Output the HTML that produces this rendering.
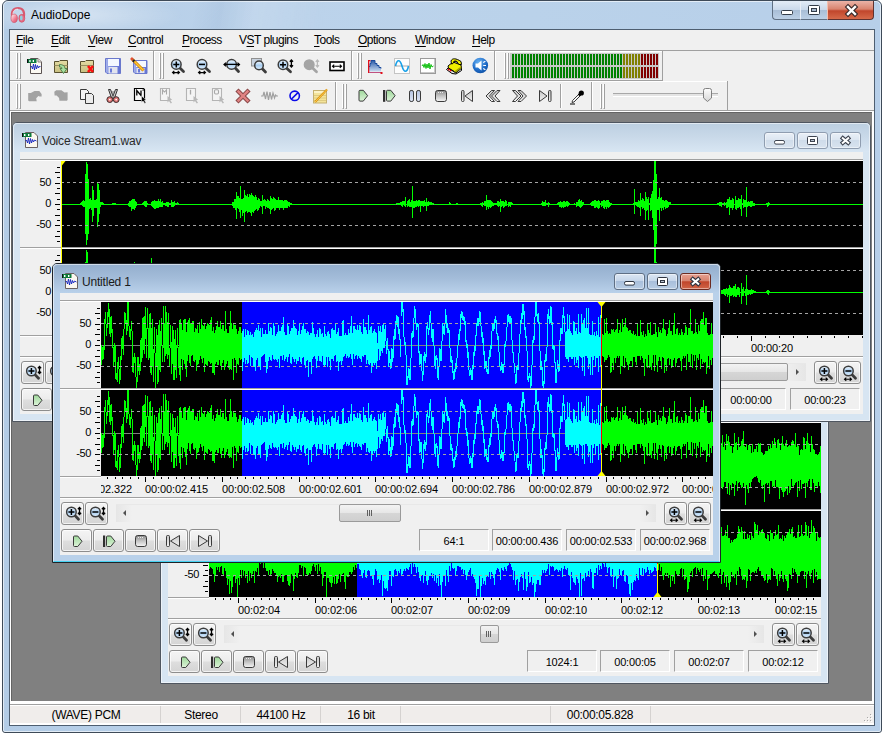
<!DOCTYPE html><html><head><meta charset="utf-8"><style>
html,body{margin:0;padding:0}
body{width:883px;height:735px;overflow:hidden;background:#fff;position:relative;font-family:'Liberation Sans', sans-serif}
.btn{position:absolute;box-sizing:border-box;border:1px solid #8d8d8d;border-radius:3px;background:linear-gradient(#f4f4f4 0%,#ececec 48%,#dedede 52%,#d4d4d4 100%);box-shadow:inset 0 0 0 1px rgba(255,255,255,.7)}
.box{position:absolute;box-sizing:border-box;border:1px solid #fff;border-left-color:#a0a0a0;border-top-color:#a0a0a0;background:#f0f0f0;font-size:11px;line-height:22px;text-align:center;color:#000;letter-spacing:-0.15px}
.grip{position:absolute;width:1px;border-left:1px solid #fff;border-right:1px solid #a0a0a0;border-bottom:1px solid #a0a0a0;box-sizing:content-box;width:0}
.u{text-decoration:underline;text-underline-offset:2px}
svg{overflow:visible}
</style></head><body><div style="position:absolute;left:2px;top:0px;width:880px;height:733px;box-sizing:border-box;border:1px solid #3e4a58;border-radius:6px 6px 3px 3px;background:linear-gradient(90deg,#b3cce6 0%,#bcd3eb 30%,#bad2ea 60%,#b7cfe9 100%)"></div><div style="position:absolute;left:3px;top:1px;width:878px;height:731px;box-sizing:border-box;border:1px solid rgba(255,255,255,.6);border-radius:5px 5px 2px 2px"></div><div style="position:absolute;left:3px;top:1px;width:878px;height:28px;border-radius:5px 5px 0 0;background:radial-gradient(ellipse 110px 22px at 70px 14px, rgba(255,255,255,.45), rgba(255,255,255,0) 100%),linear-gradient(100deg, rgba(255,255,255,0) 0px, rgba(255,255,255,0) 190px, rgba(120,150,190,.12) 215px, rgba(255,255,255,.10) 250px, rgba(255,255,255,0) 320px)"></div><svg style="position:absolute;left:10px;top:7px;" width="16" height="16" viewBox="0 0 16 16"><defs><linearGradient id="hpL" x1="0" y1="0" x2="1" y2="1"><stop offset="0" stop-color="#fff"/><stop offset=".6" stop-color="#f07a90"/><stop offset="1" stop-color="#d84868"/></linearGradient></defs>
<path d="M2.2 10.5 C1 4 3.5 1 8 1 C12.5 1 15 4 13.8 10.5" fill="none" stroke="#d85a70" stroke-width="2.2"/>
<path d="M3 8 C2.8 4 4.5 2.2 8 2.2" fill="none" stroke="#fff" stroke-width=".9" opacity=".8"/>
<ellipse cx="4.2" cy="11.3" rx="3.2" ry="4.2" fill="url(#hpL)" stroke="#c84a60" stroke-width=".6"/>
<ellipse cx="11.8" cy="11.3" rx="3" ry="4" fill="#e86a84" stroke="#c84a60" stroke-width=".6"/>
<ellipse cx="11.3" cy="11" rx="1.4" ry="2.4" fill="#8fd0e0"/></svg><div style="position:absolute;left:31px;top:8px;font-size:12px;line-height:14px;color:#000;white-space:nowrap;">AudioDope</div><div style="position:absolute;left:772px;top:1px;width:28px;height:19px;box-sizing:border-box;border:1px solid #5f6f82;border-top:none;border-right:none;border-radius:0 0 0 4px;background:linear-gradient(#e3ecf6 0%,#c9d8ea 50%,#a9bed6 52%,#bcd0e6 100%)"></div><div style="position:absolute;left:800px;top:1px;width:27px;height:19px;box-sizing:border-box;border-bottom:1px solid #5f6f82;border-left:1px solid #e8eef6;background:linear-gradient(#e3ecf6 0%,#c9d8ea 50%,#a9bed6 52%,#bcd0e6 100%)"></div><div style="position:absolute;left:827px;top:1px;width:47px;height:19px;box-sizing:border-box;border:1px solid #5e3230;border-top:none;border-left:1px solid #f3c0b0;border-radius:0 0 4px 0;background:linear-gradient(#eab3a7 0%,#d9846f 45%,#c1462c 55%,#d66a4a 100%)"></div><svg style="position:absolute;left:772px;top:1px;" width="102" height="19" viewBox="0 0 102 19"><rect x="9.5" y="9.5" width="11" height="4" rx="1" fill="#fff" stroke="#333c48" stroke-width="1"/>
<rect x="36.5" y="4.5" width="11" height="9" rx="1" fill="#fff" stroke="#333c48" stroke-width="1"/><rect x="39.5" y="7.5" width="5" height="3" fill="#a8b8cc" stroke="#333c48" stroke-width="1"/>
<path d="M76 6 L83 13 M83 6 L76 13" stroke="#3a2a2a" stroke-width="4.6" stroke-linecap="square"/><path d="M76 6 L83 13 M83 6 L76 13" stroke="#fff" stroke-width="2.4" stroke-linecap="square"/></svg><div style="position:absolute;left:9px;top:29px;width:866px;height:697px;box-sizing:border-box;border:1px solid #4e5e70;background:#f0f0f0"></div><div style="position:absolute;left:16px;top:33px;font-size:12px;line-height:14px;color:#000;white-space:nowrap;letter-spacing:-0.5px"><span class="u">F</span>ile</div><div style="position:absolute;left:51px;top:33px;font-size:12px;line-height:14px;color:#000;white-space:nowrap;letter-spacing:-0.5px"><span class="u">E</span>dit</div><div style="position:absolute;left:88px;top:33px;font-size:12px;line-height:14px;color:#000;white-space:nowrap;letter-spacing:-0.5px"><span class="u">V</span>iew</div><div style="position:absolute;left:128px;top:33px;font-size:12px;line-height:14px;color:#000;white-space:nowrap;letter-spacing:-0.5px"><span class="u">C</span>ontrol</div><div style="position:absolute;left:182px;top:33px;font-size:12px;line-height:14px;color:#000;white-space:nowrap;letter-spacing:-0.5px"><span class="u">P</span>rocess</div><div style="position:absolute;left:239px;top:33px;font-size:12px;line-height:14px;color:#000;white-space:nowrap;letter-spacing:-0.5px">V<span class="u">S</span>T plugins</div><div style="position:absolute;left:314px;top:33px;font-size:12px;line-height:14px;color:#000;white-space:nowrap;letter-spacing:-0.5px"><span class="u">T</span>ools</div><div style="position:absolute;left:358px;top:33px;font-size:12px;line-height:14px;color:#000;white-space:nowrap;letter-spacing:-0.5px"><span class="u">O</span>ptions</div><div style="position:absolute;left:415px;top:33px;font-size:12px;line-height:14px;color:#000;white-space:nowrap;letter-spacing:-0.5px"><span class="u">W</span>indow</div><div style="position:absolute;left:472px;top:33px;font-size:12px;line-height:14px;color:#000;white-space:nowrap;letter-spacing:-0.5px"><span class="u">H</span>elp</div><div style="position:absolute;left:10px;top:50px;width:864px;height:1px;background:#a0a0a0"></div><div style="position:absolute;left:10px;top:51px;width:652px;height:1px;background:#fff"></div><div style="position:absolute;left:10px;top:80px;width:652px;height:1px;background:#a0a0a0"></div><div style="position:absolute;left:10px;top:81px;width:717px;height:1px;background:#fff"></div><div style="position:absolute;left:10px;top:110px;width:864px;height:1px;background:#a0a0a0"></div><div style="position:absolute;left:10px;top:111px;width:864px;height:594px;background:#fff"></div><div class="grip" style="left:16px;top:53px;height:25px"></div><div class="grip" style="left:19px;top:53px;height:25px"></div><div style="position:absolute;left:153px;top:51px;width:1px;height:29px;background:#a0a0a0"></div><div style="position:absolute;left:154px;top:51px;width:1px;height:29px;background:#fff"></div><div class="grip" style="left:159px;top:53px;height:25px"></div><div class="grip" style="left:162px;top:53px;height:25px"></div><div style="position:absolute;left:351px;top:51px;width:1px;height:29px;background:#a0a0a0"></div><div style="position:absolute;left:352px;top:51px;width:1px;height:29px;background:#fff"></div><div class="grip" style="left:357px;top:53px;height:25px"></div><div class="grip" style="left:360px;top:53px;height:25px"></div><div style="position:absolute;left:494px;top:51px;width:1px;height:29px;background:#a0a0a0"></div><div style="position:absolute;left:495px;top:51px;width:1px;height:29px;background:#fff"></div><div class="grip" style="left:504px;top:53px;height:25px"></div><div class="grip" style="left:507px;top:53px;height:25px"></div><div style="position:absolute;left:662px;top:51px;width:1px;height:30px;background:#a0a0a0"></div><div class="grip" style="left:16px;top:84px;height:24px"></div><div class="grip" style="left:19px;top:84px;height:24px"></div><div style="position:absolute;left:335px;top:82px;width:1px;height:28px;background:#a0a0a0"></div><div style="position:absolute;left:336px;top:82px;width:1px;height:28px;background:#fff"></div><div class="grip" style="left:342px;top:84px;height:24px"></div><div class="grip" style="left:345px;top:84px;height:24px"></div><div style="position:absolute;left:560px;top:84px;width:1px;height:24px;background:#a0a0a0"></div><div style="position:absolute;left:561px;top:84px;width:1px;height:24px;background:#fff"></div><div style="position:absolute;left:591px;top:82px;width:1px;height:28px;background:#a0a0a0"></div><div style="position:absolute;left:592px;top:82px;width:1px;height:28px;background:#fff"></div><div class="grip" style="left:600px;top:84px;height:24px"></div><div class="grip" style="left:603px;top:84px;height:24px"></div><div style="position:absolute;left:727px;top:81px;width:1px;height:30px;background:#a0a0a0"></div><div style="position:absolute;left:510px;top:53px;width:149px;height:26px;background:#c8c8c8"></div><svg style="position:absolute;left:510px;top:53px;" width="149" height="26" viewBox="0 0 149 26"><rect x="2" y="1" width="2" height="11" fill="#008000"/><rect x="2" y="14" width="2" height="11" fill="#008000"/><rect x="5" y="1" width="2" height="11" fill="#008000"/><rect x="5" y="14" width="2" height="11" fill="#008000"/><rect x="8" y="1" width="2" height="11" fill="#008000"/><rect x="8" y="14" width="2" height="11" fill="#008000"/><rect x="11" y="1" width="2" height="11" fill="#008000"/><rect x="11" y="14" width="2" height="11" fill="#008000"/><rect x="14" y="1" width="2" height="11" fill="#008000"/><rect x="14" y="14" width="2" height="11" fill="#008000"/><rect x="17" y="1" width="2" height="11" fill="#008000"/><rect x="17" y="14" width="2" height="11" fill="#008000"/><rect x="20" y="1" width="2" height="11" fill="#008000"/><rect x="20" y="14" width="2" height="11" fill="#008000"/><rect x="23" y="1" width="2" height="11" fill="#008000"/><rect x="23" y="14" width="2" height="11" fill="#008000"/><rect x="26" y="1" width="2" height="11" fill="#008000"/><rect x="26" y="14" width="2" height="11" fill="#008000"/><rect x="29" y="1" width="2" height="11" fill="#008000"/><rect x="29" y="14" width="2" height="11" fill="#008000"/><rect x="32" y="1" width="2" height="11" fill="#008000"/><rect x="32" y="14" width="2" height="11" fill="#008000"/><rect x="35" y="1" width="2" height="11" fill="#008000"/><rect x="35" y="14" width="2" height="11" fill="#008000"/><rect x="38" y="1" width="2" height="11" fill="#008000"/><rect x="38" y="14" width="2" height="11" fill="#008000"/><rect x="41" y="1" width="2" height="11" fill="#008000"/><rect x="41" y="14" width="2" height="11" fill="#008000"/><rect x="44" y="1" width="2" height="11" fill="#008000"/><rect x="44" y="14" width="2" height="11" fill="#008000"/><rect x="47" y="1" width="2" height="11" fill="#008000"/><rect x="47" y="14" width="2" height="11" fill="#008000"/><rect x="50" y="1" width="2" height="11" fill="#008000"/><rect x="50" y="14" width="2" height="11" fill="#008000"/><rect x="53" y="1" width="2" height="11" fill="#008000"/><rect x="53" y="14" width="2" height="11" fill="#008000"/><rect x="56" y="1" width="2" height="11" fill="#008000"/><rect x="56" y="14" width="2" height="11" fill="#008000"/><rect x="59" y="1" width="2" height="11" fill="#008000"/><rect x="59" y="14" width="2" height="11" fill="#008000"/><rect x="62" y="1" width="2" height="11" fill="#008000"/><rect x="62" y="14" width="2" height="11" fill="#008000"/><rect x="65" y="1" width="2" height="11" fill="#008000"/><rect x="65" y="14" width="2" height="11" fill="#008000"/><rect x="68" y="1" width="2" height="11" fill="#008000"/><rect x="68" y="14" width="2" height="11" fill="#008000"/><rect x="71" y="1" width="2" height="11" fill="#008000"/><rect x="71" y="14" width="2" height="11" fill="#008000"/><rect x="74" y="1" width="2" height="11" fill="#008000"/><rect x="74" y="14" width="2" height="11" fill="#008000"/><rect x="77" y="1" width="2" height="11" fill="#008000"/><rect x="77" y="14" width="2" height="11" fill="#008000"/><rect x="80" y="1" width="2" height="11" fill="#008000"/><rect x="80" y="14" width="2" height="11" fill="#008000"/><rect x="83" y="1" width="2" height="11" fill="#008000"/><rect x="83" y="14" width="2" height="11" fill="#008000"/><rect x="86" y="1" width="2" height="11" fill="#008000"/><rect x="86" y="14" width="2" height="11" fill="#008000"/><rect x="89" y="1" width="2" height="11" fill="#008000"/><rect x="89" y="14" width="2" height="11" fill="#008000"/><rect x="92" y="1" width="2" height="11" fill="#008000"/><rect x="92" y="14" width="2" height="11" fill="#008000"/><rect x="95" y="1" width="2" height="11" fill="#008000"/><rect x="95" y="14" width="2" height="11" fill="#008000"/><rect x="98" y="1" width="2" height="11" fill="#008000"/><rect x="98" y="14" width="2" height="11" fill="#008000"/><rect x="101" y="1" width="2" height="11" fill="#008000"/><rect x="101" y="14" width="2" height="11" fill="#008000"/><rect x="104" y="1" width="2" height="11" fill="#008000"/><rect x="104" y="14" width="2" height="11" fill="#008000"/><rect x="107" y="1" width="2" height="11" fill="#008000"/><rect x="107" y="14" width="2" height="11" fill="#008000"/><rect x="110" y="1" width="2" height="11" fill="#008000"/><rect x="110" y="14" width="2" height="11" fill="#008000"/><rect x="113" y="1" width="2" height="11" fill="#808000"/><rect x="113" y="14" width="2" height="11" fill="#808000"/><rect x="116" y="1" width="2" height="11" fill="#808000"/><rect x="116" y="14" width="2" height="11" fill="#808000"/><rect x="119" y="1" width="2" height="11" fill="#808000"/><rect x="119" y="14" width="2" height="11" fill="#808000"/><rect x="122" y="1" width="2" height="11" fill="#808000"/><rect x="122" y="14" width="2" height="11" fill="#808000"/><rect x="125" y="1" width="2" height="11" fill="#808000"/><rect x="125" y="14" width="2" height="11" fill="#808000"/><rect x="128" y="1" width="2" height="11" fill="#808000"/><rect x="128" y="14" width="2" height="11" fill="#808000"/><rect x="131" y="1" width="2" height="11" fill="#800000"/><rect x="131" y="14" width="2" height="11" fill="#800000"/><rect x="134" y="1" width="2" height="11" fill="#800000"/><rect x="134" y="14" width="2" height="11" fill="#800000"/><rect x="137" y="1" width="2" height="11" fill="#800000"/><rect x="137" y="14" width="2" height="11" fill="#800000"/><rect x="140" y="1" width="2" height="11" fill="#800000"/><rect x="140" y="14" width="2" height="11" fill="#800000"/><rect x="143" y="1" width="2" height="11" fill="#800000"/><rect x="143" y="14" width="2" height="11" fill="#800000"/><rect x="146" y="1" width="2" height="11" fill="#800000"/><rect x="146" y="14" width="2" height="11" fill="#800000"/></svg><div style="position:absolute;left:613px;top:93px;width:105px;height:1px;background:#a8a8a8"></div><div style="position:absolute;left:613px;top:94px;width:105px;height:2px;background:#e4e4e4"></div><div style="position:absolute;left:613px;top:96px;width:105px;height:1px;background:#fff"></div><svg style="position:absolute;left:702px;top:87px;" width="11" height="16" viewBox="0 0 11 16"><defs><linearGradient id="gTh" x1="0" y1="0" x2="0" y2="1"><stop offset="0" stop-color="#fdfdfd"/><stop offset="1" stop-color="#d6d6d6"/></linearGradient></defs><path d="M1.5 3.5 Q1.5 1.5 3.5 1.5 H7.5 Q9.5 1.5 9.5 3.5 V11 L5.5 14.5 L1.5 11 Z" fill="url(#gTh)" stroke="#808080"/></svg><svg width="0" height="0" style="position:absolute"><defs>
<linearGradient id="gPlay" x1="0" y1="0" x2="0" y2="1"><stop offset="0" stop-color="#9fd89b"/><stop offset="1" stop-color="#dcf3d8"/></linearGradient>
<linearGradient id="gGray" x1="0" y1="0" x2="0" y2="1"><stop offset="0" stop-color="#c8c8c8"/><stop offset="1" stop-color="#f2f2f2"/></linearGradient>
<linearGradient id="gStop" x1="0" y1="0" x2="0" y2="1"><stop offset="0" stop-color="#8a8a8a"/><stop offset=".5" stop-color="#c4c4c4"/><stop offset="1" stop-color="#f6f6f6"/></linearGradient>
<linearGradient id="gPause" x1="0" y1="0" x2="0" y2="1"><stop offset="0" stop-color="#b4c4e4"/><stop offset="1" stop-color="#dce4f4"/></linearGradient>
<linearGradient id="gLens" x1="0" y1="0" x2="0" y2="1"><stop offset="0" stop-color="#f4faff"/><stop offset=".5" stop-color="#a8cdf0"/><stop offset="1" stop-color="#e0f0ff"/></linearGradient>
<linearGradient id="gFloppy" x1="0" y1="0" x2="1" y2="0"><stop offset="0" stop-color="#aab6ec"/><stop offset=".3" stop-color="#7f8fe0"/><stop offset="1" stop-color="#6272d4"/></linearGradient>
<linearGradient id="gFolder" x1="0" y1="0" x2="0" y2="1"><stop offset="0" stop-color="#e4dca4"/><stop offset="1" stop-color="#c8bf80"/></linearGradient>
<linearGradient id="gSpec" x1="0" y1="0" x2="0" y2="1"><stop offset="0" stop-color="#2a5aa8"/><stop offset="1" stop-color="#c8daf0"/></linearGradient>
<radialGradient id="gSpk" cx=".4" cy=".3" r=".8"><stop offset="0" stop-color="#6ab4f4"/><stop offset=".6" stop-color="#1f6cc8"/><stop offset="1" stop-color="#0c4a9c"/></radialGradient>
</defs></svg><svg style="position:absolute;left:26px;top:57px;" width="18" height="18" viewBox="0 0 18 18"><path d="M4.5 1.5 H12 L15.5 5 V16.5 H4.5 Z" fill="#fbf9f2" stroke="#5a5252"/>
<path d="M12 1.5 V5 H15.5" fill="#e8e4dc" stroke="#8a8282"/>
<rect x="1" y="2" width="9.5" height="4" fill="#0c7a3e"/><rect x="1" y="2" width="1.2" height="4" fill="#101010"/>
<rect x="3.3" y="3" width="1.3" height="2" fill="#fff"/><rect x="6.7" y="3" width="1.3" height="2" fill="#fff"/>
<path d="M4.5 10 L5.5 9 L6.5 12 L7.5 7 L8.5 13 L9.5 7.5 L10.5 12 L11.5 8.5 L12.5 11 L13.5 9 L14.5 10" fill="none" stroke="#1020c0" stroke-width="0.9"/></svg><svg style="position:absolute;left:53px;top:58px;" width="17" height="17" viewBox="0 0 17 17"><path d="M1.5 3.5 H6 L7 2.5 H14.5 V14.5 H1.5 Z" fill="url(#gFolder)" stroke="#585030" stroke-width="1"/>
<path d="M1.5 7.5 H14.5" stroke="#9a9060" stroke-width="1"/>
<path d="M6.5 6.5 C10 6.5 12 8 12 10.5 H14 L10.5 15.5 L7 10.5 H9 C9 9.5 8.5 9 6.5 9 Z" fill="#a8e0a0" stroke="#4a7a48" stroke-width="0.9"/></svg><svg style="position:absolute;left:79px;top:58px;" width="17" height="17" viewBox="0 0 17 17"><path d="M1.5 3.5 H6 L7 2.5 H14.5 V14.5 H1.5 Z" fill="url(#gFolder)" stroke="#585030" stroke-width="1"/>
<path d="M1.5 7.5 H14.5" stroke="#9a9060" stroke-width="1"/>
<path d="M9 8 L14 14 M14 8 L9 14" stroke="#ff1010" stroke-width="2.6"/></svg><svg style="position:absolute;left:105px;top:58px;" width="16" height="16" viewBox="0 0 16 16"><path d="M0.5 0.5 H15.5 V15.5 H2 L0.5 14 Z" fill="url(#gFloppy)" stroke="#6a78cc" stroke-width="1"/>
<rect x="3" y="1" width="11" height="7" fill="#f4f8ff"/><rect x="3.5" y="9" width="9" height="6.5" fill="#e2e4ee"/><rect x="5" y="10.5" width="2" height="4" fill="#6a7ad8"/></svg><svg style="position:absolute;left:130px;top:57px;" width="18" height="18" viewBox="0 0 18 18"><path d="M3.5 3.5 H17 V16.5 H5 L3.5 15 Z" fill="url(#gFloppy)" stroke="#6a78cc" stroke-width="1"/>
<rect x="6" y="4" width="10" height="6" fill="#f4f8ff"/><rect x="6.5" y="11" width="8" height="5" fill="#e2e4ee"/><rect x="8" y="12" width="2" height="3.5" fill="#6a7ad8"/>
<path d="M2.5 2.5 L13.5 13.5" stroke="#c87800" stroke-width="3"/><path d="M2.5 2.5 L13.5 13.5" stroke="#ffc830" stroke-width="1.6"/>
<path d="M1 1 L3 3" stroke="#e05030" stroke-width="2.6"/><path d="M3 3.2 L4.3 4.5" stroke="#202020" stroke-width="2.6"/></svg><svg style="position:absolute;left:166px;top:55px;" width="22" height="22" viewBox="0 0 22 22"><path d="M13.18 12.280000000000001 L17.5 16.5" stroke="#3c3c3c" stroke-width="2.8" stroke-linecap="round"/><circle cx="10.3" cy="9.4" r="4.8" fill="url(#gLens)" stroke="#3c3c3c" stroke-width="1.5"/><path d="M7.300000000000001 9.4 H13.3 M10.3 6.4 V12.4" stroke="#000" stroke-width="1.5"/><path d="M6.5 17.6 H13.5 M8.3 16.0 L6.5 17.6 L8.3 19.200000000000003 M11.7 16.0 L13.5 17.6 L11.7 19.200000000000003" stroke="#000" stroke-width="1.1" fill="none"/></svg><svg style="position:absolute;left:192px;top:55px;" width="22" height="22" viewBox="0 0 22 22"><path d="M12.879999999999999 12.280000000000001 L17.5 16.5" stroke="#3c3c3c" stroke-width="2.8" stroke-linecap="round"/><circle cx="10" cy="9.4" r="4.8" fill="url(#gLens)" stroke="#3c3c3c" stroke-width="1.5"/><path d="M7 9.4 H13" stroke="#000" stroke-width="1.5"/><path d="M6.5 17.6 H13.5 M8.3 16.0 L6.5 17.6 L8.3 19.200000000000003 M11.7 16.0 L13.5 17.6 L11.7 19.200000000000003" stroke="#000" stroke-width="1.1" fill="none"/></svg><svg style="position:absolute;left:221px;top:55px;" width="22" height="22" viewBox="0 0 22 22"><path d="M13.48 12.280000000000001 L17.5 16.5" stroke="#3c3c3c" stroke-width="2.8" stroke-linecap="round"/><circle cx="10.6" cy="9.4" r="4.8" fill="url(#gLens)" stroke="#3c3c3c" stroke-width="1.5"/><path d="M3 9.4 H18.5 M5 7.6 L3 9.4 L5 11.2 M16.5 7.6 L18.5 9.4 L16.5 11.2" stroke="#000" stroke-width="1.2" fill="none"/></svg><svg style="position:absolute;left:249px;top:55px;" width="22" height="22" viewBox="0 0 22 22"><rect x="2.5" y="3.5" width="10" height="7.5" fill="#c8d2de" stroke="#909090"/><path d="M12.58 12.98 L16.5 17" stroke="#3c3c3c" stroke-width="2.8" stroke-linecap="round"/><circle cx="10" cy="10.4" r="4.3" fill="url(#gLens)" stroke="#3c3c3c" stroke-width="1.5"/></svg><svg style="position:absolute;left:273px;top:55px;" width="22" height="22" viewBox="0 0 22 22"><path d="M12.879999999999999 12.579999999999998 L17.5 16.8" stroke="#3c3c3c" stroke-width="2.8" stroke-linecap="round"/><circle cx="10" cy="9.7" r="4.8" fill="url(#gLens)" stroke="#3c3c3c" stroke-width="1.5"/><path d="M7 9.7 H13 M10 6.699999999999999 V12.7" stroke="#000" stroke-width="1.5"/><path d="M18.4 5 V12 M16.799999999999997 6.8 L18.4 5 L20.0 6.8 M16.799999999999997 10.2 L18.4 12 L20.0 10.2" stroke="#000" stroke-width="1.3" fill="none"/></svg><svg style="position:absolute;left:299px;top:55px;" width="22" height="22" viewBox="0 0 22 22"><path d="M13.079999999999998 12.579999999999998 L17.5 16.8" stroke="#a4a4a4" stroke-width="2.8" stroke-linecap="round"/><circle cx="10.2" cy="9.7" r="4.8" fill="#a4a4a4" stroke="#a4a4a4" stroke-width="1.5"/><path d="M18.4 5 V12 M16.8 6.8 L18.4 5 L20 6.8 M16.8 10.2 L18.4 12 L20 10.2" stroke="#b8b8b8" stroke-width="1.2" fill="none"/></svg><svg style="position:absolute;left:329px;top:60px;" width="16" height="12" viewBox="0 0 16 12"><rect x="1" y="2" width="14" height="8.5" fill="#fff" stroke="#000" stroke-width="1.6"/><path d="M3.5 6.2 H12.5 M5.2 4.6 L3.5 6.2 L5.2 7.8 M10.8 4.6 L12.5 6.2 L10.8 7.8" stroke="#000" stroke-width="1.1" fill="none"/></svg><svg style="position:absolute;left:364px;top:55px;" width="24" height="22" viewBox="0 0 24 22"><path d="M5 12 H6 V9 H7 V6 H11 V9 H13 V11 H15 V13 H17 V17 H5 Z" transform="translate(0,-0.5)" fill="url(#gSpec)"/>
<path d="M5 11.5 H6 V8.5 H7 V5.5 H11 V8.5 H13 V10.5 H15 V12.5 H17 V13.5" fill="none" stroke="#1a4a9c" stroke-width="1"/>
<rect x="4" y="5" width="1.3" height="13" fill="#e0101c"/><rect x="4" y="5" width="2.5" height="1.2" fill="#e0101c"/><rect x="5" y="17" width="12" height="1" fill="#c05080"/><rect x="16.5" y="17" width="2" height="2" fill="#e0101c"/></svg><svg style="position:absolute;left:394px;top:58px;" width="16" height="16" viewBox="0 0 16 16"><rect x="0.5" y="0.5" width="15" height="15" fill="#fdfdfd" stroke="#c4c4c4"/><path d="M1 8 H15" stroke="#a8a8a8"/>
<path d="M1.5 8 C3 1 6 1 8 8 C10 15 13 15 14.5 8" fill="none" stroke="#18a0e8" stroke-width="1.6"/></svg><svg style="position:absolute;left:420px;top:58px;" width="16" height="16" viewBox="0 0 16 16"><rect x="0.5" y="0.5" width="15" height="15" fill="#fff" stroke="#9a9a9a"/><rect x="1" y="14" width="14" height="1" fill="#c8c8c8"/><rect x="14" y="1" width="1" height="14" fill="#c8c8c8"/>
<path d="M2 8 L3 6.5 L4 9.5 L5 5.5 L6 10.5 L7 6 L8 10 L9 5 L10 11 L11 6.5 L12 9 L13.5 8" fill="none" stroke="#10c010" stroke-width="1"/></svg><svg style="position:absolute;left:442px;top:55px;" width="24" height="22" viewBox="0 0 24 22"><path d="M4.5 14.5 L6 13 L14 18 L19.5 13 L19.5 15.5 L14 19 L10 18.5 Z" fill="#e8e8e8" stroke="#000" stroke-width="1"/>
<circle cx="6.8" cy="14.5" r=".9" fill="#ff0000"/><circle cx="8.6" cy="15.6" r=".9" fill="#ff0000"/>
<path d="M6 11 L11 7 L19 10 L19.5 13 L14 17.5 L6.5 13 Z" fill="#f0f000" stroke="#000" stroke-width="1"/>
<path d="M12 16.5 L19 11.5 L19.5 13 L14 17.5 Z" fill="#a0a000"/>
<path d="M9 6 C10 3 14 3 19 6.5 L19.5 9.5 L17 9.5 L15 7 C13 6 11.5 6.5 11 8.5 L9.5 9 Z" fill="#f0f000" stroke="#000" stroke-width="1"/>
<path d="M11.5 7 C12 5.5 14 5.8 15.5 7" fill="none" stroke="#000" stroke-width="1"/></svg><svg style="position:absolute;left:472px;top:57px;" width="17" height="17" viewBox="0 0 17 17"><circle cx="8.3" cy="8.5" r="7.8" fill="url(#gSpk)"/>
<path d="M3.5 6.5 H6 L9.5 3.5 V13.5 L6 10.5 H3.5 Z" fill="#fff"/>
<path d="M11.2 5.5 L13.4 4.2 M11.2 8.5 H14 M11.2 11.5 L13.4 12.8" stroke="#fff" stroke-width="1.1"/></svg><svg style="position:absolute;left:0px;top:0px;" width="80" height="110" viewBox="0 0 80 110"><path d="M28.2 93.1 L30.8 93.1 L34.5 91.1 L39.3 91.1 L41.6 93.9 L41.6 96.5 L39.6 96.5 L38.4 95.9 L36.2 98.2 L36.7 101.3 L29.1 101.3 L28.2 100.4 Z" fill="#a2a2a2"/><path d="M54.3 91.7 L56.3 90.2 L61.4 90.2 L64.5 92.5 L67.6 92.2 L67.6 99.9 L66.8 100.7 L59.4 100.7 L59.1 97.9 L56.6 95.6 L54.6 95.6 Z" fill="#a2a2a2"/></svg><svg style="position:absolute;left:80px;top:88px;" width="16" height="16" viewBox="0 0 16 16"><path d="M0.5 1.5 H6.5 L8.5 3.5 V11.5 H0.5 Z" fill="#f4f4f4" stroke="#3a3a3a"/>
<path d="M5.5 5.5 H11.5 L13.5 7.5 V15.5 H5.5 Z" fill="#ececec" stroke="#3a3a3a"/></svg><svg style="position:absolute;left:105px;top:88px;" width="16" height="16" viewBox="0 0 16 16"><path d="M3.5 1.5 L5.5 1.5 L8 8 L10.5 1.5 L12.5 1.5 L9.5 10 L6.5 10 Z" fill="#d0d0d0" stroke="#303030" stroke-width="1"/>
<path d="M8 3 V9" stroke="#707070" stroke-width="1"/>
<circle cx="4.8" cy="11.6" r="2.9" fill="#e07474" stroke="#3a2a2a" stroke-width="1"/><circle cx="11.2" cy="11.6" r="2.9" fill="#e07474" stroke="#3a2a2a" stroke-width="1"/>
<circle cx="4.8" cy="11.6" r="0.9" fill="#fff"/><circle cx="11.2" cy="11.6" r="0.9" fill="#fff"/></svg><svg style="position:absolute;left:133px;top:87px;" width="16" height="17" viewBox="0 0 16 17"><path d="M1.5 1.5 H10.5 L11.5 2.5 V13.5 H1.5 Z" fill="#f8f8f8" stroke="#000" stroke-width="1.2"/>
<path d="M3.8 8.5 V3.5 L8 8.5 V3.5" stroke="#000" stroke-width="1.3" fill="none"/><rect x="9.5" y="2.5" width="1.2" height="1.2" fill="#000"/>
<path d="M8.5 9 L8.5 15.5 L10 14 L11.8 16.5 L13 15.8 L11.3 13.2 L13.2 12.8 Z" fill="#000" stroke="#fff" stroke-width=".5"/></svg><svg style="position:absolute;left:159px;top:87px;" width="16" height="17" viewBox="0 0 16 17"><path d="M1.5 1.5 H10.5 V13.5 H1.5 Z" fill="#f4f4f4" stroke="#b4b4b4" stroke-width="1.1"/><path d="M3.5 7.5 V2.8 L5.5 5 L7.5 2.8 V7.5" stroke="#a8a8a8" stroke-width="1.1" fill="none"/>
<path d="M8.5 9 L8.5 15.5 L10 14 L11.8 16.5 L13 15.8 L11.3 13.2 L13.2 12.8 Z" fill="#b8b8b8"/></svg><svg style="position:absolute;left:185px;top:87px;" width="16" height="17" viewBox="0 0 16 17"><path d="M1.5 1.5 H10.5 V13.5 H1.5 Z" fill="#f4f4f4" stroke="#b4b4b4" stroke-width="1.1"/><path d="M5.5 2.8 V7.5" stroke="#a8a8a8" stroke-width="1.3"/>
<path d="M8.5 9 L8.5 15.5 L10 14 L11.8 16.5 L13 15.8 L11.3 13.2 L13.2 12.8 Z" fill="#b8b8b8"/></svg><svg style="position:absolute;left:211px;top:87px;" width="16" height="17" viewBox="0 0 16 17"><path d="M1.5 1.5 H10.5 V13.5 H1.5 Z" fill="#f4f4f4" stroke="#b4b4b4" stroke-width="1.1"/><rect x="3.5" y="2.8" width="4" height="4.2" rx="1.2" fill="none" stroke="#a8a8a8" stroke-width="1.1"/>
<path d="M8.5 9 L8.5 15.5 L10 14 L11.8 16.5 L13 15.8 L11.3 13.2 L13.2 12.8 Z" fill="#b8b8b8"/></svg><svg style="position:absolute;left:235px;top:88px;" width="16" height="16" viewBox="0 0 16 16"><path d="M3.5 3.5 L12.5 12.5 M12.5 3.5 L3.5 12.5" stroke="#8a4848" stroke-width="4.4" stroke-linecap="square"/>
<path d="M3.5 3.5 L12.5 12.5 M12.5 3.5 L3.5 12.5" stroke="#e08282" stroke-width="2.4" stroke-linecap="square"/></svg><svg style="position:absolute;left:261px;top:88px;" width="17" height="16" viewBox="0 0 17 16"><path d="M0 8 H2 L3 4 L4.5 11 L6 3.5 L7.5 12 L9 4 L10.5 11.5 L12 5 L13.5 10 L14.5 7 L15.5 8 H17" fill="none" stroke="#a0a0a0" stroke-width="1.2"/></svg><svg style="position:absolute;left:287px;top:88px;" width="16" height="16" viewBox="0 0 16 16"><circle cx="7.7" cy="7.8" r="4.7" fill="none" stroke="#0a0ae8" stroke-width="1.6"/><path d="M4.5 11 L11 4.6" stroke="#0a0ae8" stroke-width="1.6"/></svg><svg style="position:absolute;left:312px;top:88px;" width="16" height="16" viewBox="0 0 16 16"><rect x="1.5" y="2.5" width="13" height="12.5" fill="#f4e49a" stroke="#c4b070"/><rect x="2" y="3" width="12" height="2" fill="#fbf3c8"/>
<path d="M2 7.5 H14 M2 10 H14 M2 12.5 H14" stroke="#d8c47a" stroke-width=".8"/>
<path d="M3 14 L15 1.5" stroke="#d88a10" stroke-width="2"/><path d="M3 14 L15 1.5" stroke="#ffd84a" stroke-width=".9"/></svg><svg style="position:absolute;left:358px;top:89px;" width="12" height="14" viewBox="0 0 12 14"><path d="M1.0 2.3 Q1.0 1.3 2.0 1.3 H5.3 L9.6 6.7 L5.3 12.100000000000001 H2.0 Q1.0 12.100000000000001 1.0 11.100000000000001 Z" fill="url(#gPlay)" stroke="#3a3a3a" stroke-width="1" stroke-linejoin="round"/></svg><svg style="position:absolute;left:382px;top:89px;" width="15" height="14" viewBox="0 0 15 14"><rect x="1" y="1" width="2.3" height="11.8" fill="#303030"/><path d="M4.5 2.3 Q4.5 1.3 5.5 1.3 H8.8 L13.1 6.7 L8.8 12.100000000000001 H5.5 Q4.5 12.100000000000001 4.5 11.100000000000001 Z" fill="url(#gPlay)" stroke="#3a3a3a" stroke-width="1" stroke-linejoin="round"/></svg><svg style="position:absolute;left:408px;top:89px;" width="14" height="14" viewBox="0 0 14 14"><rect x="1.5" y="1.5" width="4" height="11" rx="1.6" fill="url(#gPause)" stroke="#3a3a3a"/><rect x="8.5" y="1.5" width="4" height="11" rx="1.6" fill="url(#gPause)" stroke="#3a3a3a"/></svg><svg style="position:absolute;left:434px;top:89px;" width="14" height="14" viewBox="0 0 14 14"><rect x="1.5" y="1.5" width="11" height="11" rx="2.2" fill="url(#gStop)" stroke="#3a3a3a"/><path d="M4 3.5 H10" stroke="#fff" stroke-width=".8" stroke-dasharray="1 1"/></svg><svg style="position:absolute;left:460px;top:89px;" width="14" height="14" viewBox="0 0 14 14"><rect x="1.5" y="1.5" width="2.5" height="11" rx="1" fill="url(#gGray)" stroke="#3a3a3a"/><path d="M12.5 1.5 V12.5 L5 7 Z" fill="url(#gGray)" stroke="#3a3a3a" stroke-linejoin="round"/></svg><svg style="position:absolute;left:485px;top:89px;" width="17" height="14" viewBox="0 0 17 14"><path d="M6.5 1.5 L1 7 L6.5 12.5 H9.5 L4.5 7 L9.5 1.5 Z M12 1.5 L6.5 7 L12 12.5 H15 L10 7 L15 1.5 Z" fill="url(#gGray)" stroke="#3a3a3a" stroke-linejoin="round"/></svg><svg style="position:absolute;left:511px;top:89px;" width="17" height="14" viewBox="0 0 17 14"><path d="M4.5 1.5 L10 7 L4.5 12.5 H1.5 L6.5 7 L1.5 1.5 Z M10 1.5 L15.5 7 L10 12.5 H7 L12 7 L7 1.5 Z" fill="url(#gGray)" stroke="#3a3a3a" stroke-linejoin="round"/></svg><svg style="position:absolute;left:538px;top:89px;" width="14" height="14" viewBox="0 0 14 14"><path d="M1.5 1.5 V12.5 L9 7 Z" fill="url(#gGray)" stroke="#3a3a3a" stroke-linejoin="round"/><rect x="10.5" y="1.5" width="2.5" height="11" rx="1" fill="url(#gGray)" stroke="#3a3a3a"/></svg><svg style="position:absolute;left:569px;top:88px;" width="16" height="17" viewBox="0 0 16 17"><path d="M3.5 12.5 L10 6 L11.5 7.5 L5 14 L3 14.5 Z" fill="#f4f4f4" stroke="#3a3a3a" stroke-width="1"/>
<circle cx="12.3" cy="5" r="2.6" fill="#000"/><path d="M9.3 6 L11.3 8" stroke="#000" stroke-width="1.4"/>
<path d="M1 16 H6" stroke="#000" stroke-width="1"/></svg><div style="position:absolute;left:11px;top:112px;width:861px;height:589px;background:#646464"></div><div style="position:absolute;left:12px;top:113px;width:860px;height:588px;background:#808080"></div><div style="position:absolute;left:10px;top:704px;width:864px;height:1px;background:#a0a0a0"></div><div style="position:absolute;left:10px;top:705px;width:864px;height:1px;background:#fff"></div><div style="position:absolute;left:10px;top:706px;width:862px;height:17px;background:#f0edeb"></div><div style="position:absolute;left:10px;top:723px;width:864px;height:2px;background:#fff"></div><div style="position:absolute;left:160px;top:706px;width:1px;height:17px;background:#d5d2d0"></div><div style="position:absolute;left:240px;top:706px;width:1px;height:17px;background:#d5d2d0"></div><div style="position:absolute;left:320px;top:706px;width:1px;height:17px;background:#d5d2d0"></div><div style="position:absolute;left:400px;top:706px;width:1px;height:17px;background:#d5d2d0"></div><div style="position:absolute;left:550px;top:706px;width:1px;height:17px;background:#d5d2d0"></div><div style="position:absolute;left:650px;top:706px;width:1px;height:17px;background:#d5d2d0"></div><div style="position:absolute;left:-14px;width:200px;text-align:center;top:708px;font-size:12px;line-height:14px;color:#000;white-space:nowrap;letter-spacing:-0.3px">(WAVE) PCM</div><div style="position:absolute;left:101px;width:200px;text-align:center;top:708px;font-size:12px;line-height:14px;color:#000;white-space:nowrap;letter-spacing:-0.3px">Stereo</div><div style="position:absolute;left:181px;width:200px;text-align:center;top:708px;font-size:12px;line-height:14px;color:#000;white-space:nowrap;letter-spacing:-0.3px">44100 Hz</div><div style="position:absolute;left:261px;width:200px;text-align:center;top:708px;font-size:12px;line-height:14px;color:#000;white-space:nowrap;letter-spacing:-0.3px">16 bit</div><div style="position:absolute;left:500px;width:200px;text-align:center;top:708px;font-size:12px;line-height:14px;color:#000;white-space:nowrap;letter-spacing:-0.3px">00:00:05.828</div><svg style="position:absolute;left:860px;top:710px;" width="14" height="14" viewBox="0 0 14 14"><rect x="11" y="5" width="1" height="1" fill="#fff"/><rect x="10" y="4" width="1" height="1" fill="#a8a8a8"/><rect x="8" y="8" width="1" height="1" fill="#fff"/><rect x="7" y="7" width="1" height="1" fill="#a8a8a8"/><rect x="11" y="8" width="1" height="1" fill="#fff"/><rect x="10" y="7" width="1" height="1" fill="#a8a8a8"/><rect x="5" y="11" width="1" height="1" fill="#fff"/><rect x="4" y="10" width="1" height="1" fill="#a8a8a8"/><rect x="8" y="11" width="1" height="1" fill="#fff"/><rect x="7" y="10" width="1" height="1" fill="#a8a8a8"/><rect x="11" y="11" width="1" height="1" fill="#fff"/><rect x="10" y="10" width="1" height="1" fill="#a8a8a8"/></svg><div style="position:absolute;left:160px;top:384px;width:669px;height:300px;overflow:hidden"><div style="position:absolute;left:0px;top:0px;width:669px;height:300px;box-sizing:border-box;border:1px solid #4f5660;border-radius:5px 5px 0 0;background:#d7e5f2"></div><div style="position:absolute;left:1px;top:1px;width:667px;height:29px;border-radius:4px 4px 0 0;background:linear-gradient(180deg,#bccfe1 0px,#c9d9e9 14px,#d8e6f3 29px)"></div><div style="position:absolute;left:1px;top:1px;width:667px;height:298px;box-sizing:border-box;border:1px solid rgba(255,255,255,.55);border-radius:4px 4px 0 0"></div><svg style="position:absolute;left:10px;top:10px;" width="16" height="16" viewBox="0 0 16 16"><path d="M3.5 0.5 H12 L15.5 4 V15.5 H3.5 Z" fill="#fbf8f0" stroke="#6a6060"/>
<rect x="0" y="1" width="9.5" height="4" fill="#0e7a3a"/><rect x="0" y="1" width="1" height="4" fill="#111"/><rect x="2" y="2" width="1.4" height="2" fill="#fff"/><rect x="6" y="2" width="1.4" height="2" fill="#fff"/>
<path d="M3.5 9 L4.5 8 L5.5 11 L6.5 6 L7.5 12 L8.5 6.5 L9.5 11 L10.5 7.5 L11.5 10 L12.5 8 L14.5 9" fill="none" stroke="#1020c0" stroke-width="0.9"/></svg><div style="position:absolute;left:30px;top:12px;font-size:12px;line-height:14px;color:#2a2a2a;white-space:nowrap;letter-spacing:-0.2px">Voice Stream2.wav</div><div style="position:absolute;left:562px;top:10px;width:31px;height:17px;box-sizing:border-box;border:1px solid #8f9db0;border-radius:3px;background:linear-gradient(#e9eff7 0%,#dce6f1 45%,#cfdcea 50%,#d8e3ef 100%);box-shadow:inset 0 0 0 1px rgba(255,255,255,.45)"></div><div style="position:absolute;left:595px;top:10px;width:31px;height:17px;box-sizing:border-box;border:1px solid #8f9db0;border-radius:3px;background:linear-gradient(#e9eff7 0%,#dce6f1 45%,#cfdcea 50%,#d8e3ef 100%);box-shadow:inset 0 0 0 1px rgba(255,255,255,.45)"></div><div style="position:absolute;left:628px;top:10px;width:31px;height:17px;box-sizing:border-box;border:1px solid #8f9db0;border-radius:3px;background:linear-gradient(#e9eff7 0%,#dce6f1 45%,#cfdcea 50%,#d8e3ef 100%);box-shadow:inset 0 0 0 1px rgba(255,255,255,.45)"></div><svg style="position:absolute;left:562px;top:10px;" width="97" height="17" viewBox="0 0 97 17"><rect x="10.5" y="8.5" width="10" height="3.6" rx="1.5" fill="#fff" stroke="#3e4450" stroke-width="1"/>
<rect x="43.5" y="4.5" width="10" height="8" rx="1" fill="#fff" stroke="#3e4450" stroke-width="1"/><rect x="46.5" y="7.5" width="4" height="2" fill="#b8c2d0" stroke="#3e4450" stroke-width="1"/>
<path d="M78.8 6.2 L84.2 10.8 M84.2 6.2 L78.8 10.8" stroke="#3e4450" stroke-width="4.2" stroke-linecap="square"/><path d="M78.8 6.2 L84.2 10.8 M84.2 6.2 L78.8 10.8" stroke="#fff" stroke-width="2" stroke-linecap="square"/></svg><div style="position:absolute;left:8px;top:30px;width:653px;height:262px;overflow:hidden"><div style="position:absolute;left:0px;top:0px;width:653px;height:262px;background:#f0f0f0"></div><div style="position:absolute;left:0px;top:7px;width:653px;height:1px;background:#a0a0a0"></div><div style="position:absolute;left:0px;top:8px;width:653px;height:1px;background:#fff"></div><svg style="position:absolute;left:0px;top:9px;" width="41" height="86" viewBox="0 0 41 86"><rect x="37" y="6" width="3" height="1" fill="#000"/><rect x="35" y="11" width="5" height="1" fill="#000"/><rect x="37" y="16" width="3" height="1" fill="#000"/><rect x="35" y="22" width="5" height="1" fill="#000"/><rect x="37" y="27" width="3" height="1" fill="#000"/><rect x="35" y="32" width="5" height="1" fill="#000"/><rect x="37" y="38" width="3" height="1" fill="#000"/><rect x="35" y="43" width="5" height="1" fill="#000"/><rect x="37" y="48" width="3" height="1" fill="#000"/><rect x="35" y="54" width="5" height="1" fill="#000"/><rect x="37" y="59" width="3" height="1" fill="#000"/><rect x="35" y="64" width="5" height="1" fill="#000"/><rect x="37" y="70" width="3" height="1" fill="#000"/><rect x="35" y="75" width="5" height="1" fill="#000"/><rect x="37" y="80" width="3" height="1" fill="#000"/></svg><div style="position:absolute;left:-169px;width:200px;text-align:right;top:24px;font-size:11px;line-height:13px;color:#000;white-space:nowrap;letter-spacing:-0.4px">50</div><div style="position:absolute;left:-169px;width:200px;text-align:right;top:45px;font-size:11px;line-height:13px;color:#000;white-space:nowrap;letter-spacing:-0.4px">0</div><div style="position:absolute;left:-169px;width:200px;text-align:right;top:66px;font-size:11px;line-height:13px;color:#000;white-space:nowrap;letter-spacing:-0.4px">-50</div><svg style="position:absolute;left:0px;top:97px;" width="41" height="86" viewBox="0 0 41 86"><rect x="37" y="6" width="3" height="1" fill="#000"/><rect x="35" y="11" width="5" height="1" fill="#000"/><rect x="37" y="16" width="3" height="1" fill="#000"/><rect x="35" y="22" width="5" height="1" fill="#000"/><rect x="37" y="27" width="3" height="1" fill="#000"/><rect x="35" y="32" width="5" height="1" fill="#000"/><rect x="37" y="38" width="3" height="1" fill="#000"/><rect x="35" y="43" width="5" height="1" fill="#000"/><rect x="37" y="48" width="3" height="1" fill="#000"/><rect x="35" y="54" width="5" height="1" fill="#000"/><rect x="37" y="59" width="3" height="1" fill="#000"/><rect x="35" y="64" width="5" height="1" fill="#000"/><rect x="37" y="70" width="3" height="1" fill="#000"/><rect x="35" y="75" width="5" height="1" fill="#000"/><rect x="37" y="80" width="3" height="1" fill="#000"/></svg><div style="position:absolute;left:-169px;width:200px;text-align:right;top:112px;font-size:11px;line-height:13px;color:#000;white-space:nowrap;letter-spacing:-0.4px">50</div><div style="position:absolute;left:-169px;width:200px;text-align:right;top:133px;font-size:11px;line-height:13px;color:#000;white-space:nowrap;letter-spacing:-0.4px">0</div><div style="position:absolute;left:-169px;width:200px;text-align:right;top:154px;font-size:11px;line-height:13px;color:#000;white-space:nowrap;letter-spacing:-0.4px">-50</div><svg style="position:absolute;left:41px;top:9px;overflow:hidden" width="612" height="174" viewBox="0 0 612 174"><rect x="0" y="0" width="612" height="86" fill="#000"/><rect x="148" y="0" width="300" height="86" fill="#0000ff"/><path d="M0 43.5H612" stroke="#808080" stroke-width="1"/><path d="M0.5 26V63M1.5 21V77M2.5 23V68M3.5 26V56M4.5 27V66M5.5 26V60M6.5 27V73M7.5 27V68M8.5 15V58M9.5 28V61M10.5 31V58M11.5 24V52M12.5 28V57M13.5 26V56M14.5 26V55M15.5 22V52M16.5 22V56M17.5 16V55M18.5 11V60M19.5 11V56M20.5 18V69M21.5 13V60M22.5 17V58M23.5 18V69M24.5 0V59M25.5 14V65M26.5 16V68M27.5 13V64M28.5 16V71M29.5 20V61M30.5 23V70M31.5 20V59M32.5 23V67M33.5 22V62M34.5 19V64M35.5 19V73M36.5 23V72M37.5 26V67M38.5 23V67M39.5 12V75M40.5 31V86M41.5 32V72M42.5 24V74M43.5 30V73M44.5 31V71M45.5 34V75M46.5 30V66M47.5 32V69M48.5 30V61M49.5 28V61M50.5 30V60M51.5 32V62M52.5 30V58M53.5 16V61M54.5 22V58M55.5 19V60M56.5 20V55M57.5 15V57M58.5 19V54M59.5 23V59M60.5 21V58M61.5 18V55M62.5 23V60M63.5 25V56M64.5 22V56M65.5 17V60M66.5 15V57M67.5 14V56M68.5 14V57M69.5 25V55M70.5 15V60M71.5 22V53M72.5 20V55M73.5 22V63M74.5 16V74M75.5 18V65M76.5 27V69M77.5 22V68M78.5 18V71M79.5 21V73M80.5 30V85M81.5 29V79M82.5 27V71M83.5 23V65M84.5 31V84M85.5 26V77M86.5 30V86M87.5 30V86M88.5 25V66M89.5 18V77M90.5 14V69M91.5 28V66M92.5 26V66M93.5 28V78M94.5 29V65M95.5 30V72M96.5 29V69M97.5 31V67M98.5 28V75M99.5 29V74M100.5 27V63M101.5 24V59M102.5 28V62M103.5 18V60M104.5 22V66M105.5 17V64M106.5 21V57M107.5 15V54M108.5 12V57M109.5 20V56M110.5 21V53M111.5 19V57M112.5 22V52M113.5 7V59M114.5 7V61M115.5 24V57M116.5 22V65M117.5 17V66M118.5 15V67M119.5 15V67M120.5 12V63M121.5 12V59M122.5 22V59M123.5 23V60M124.5 22V60M125.5 18V67M126.5 22V65M127.5 18V67M128.5 20V76M129.5 25V67M130.5 26V66M131.5 21V71M132.5 23V70M133.5 28V66M134.5 27V64M135.5 23V68M136.5 27V65M137.5 26V65M138.5 28V64M139.5 29V70M140.5 25V67M141.5 26V73M142.5 31V70M143.5 26V61M144.5 32V69M145.5 25V62M146.5 27V66M147.5 30V58M448.5 5V63M449.5 27V56M450.5 23V53M451.5 26V54M452.5 30V61M453.5 29V52M454.5 22V52M455.5 33V55M456.5 34V58M457.5 32V61M458.5 28V57M459.5 32V57M460.5 27V64M461.5 27V70M462.5 27V58M463.5 26V66M464.5 18V68M465.5 23V77M466.5 31V57M467.5 24V72M468.5 31V58M469.5 29V59M470.5 32V62M471.5 27V61M472.5 26V61M473.5 29V66M474.5 26V68M475.5 19V64M476.5 17V73M477.5 21V67M478.5 23V65M479.5 13V66M480.5 24V78M481.5 24V84M482.5 18V72M483.5 24V69M484.5 17V62M485.5 28V67M486.5 28V57M487.5 20V60M488.5 14V57M489.5 27V57M490.5 24V64M491.5 14V61M492.5 24V57M493.5 19V60M494.5 17V62M495.5 9V63M496.5 21V67M497.5 26V59M498.5 8V67M499.5 29V69M500.5 29V65M501.5 29V63M502.5 23V56M503.5 24V72M504.5 24V64M505.5 27V61M506.5 22V55M507.5 29V58M508.5 25V59M509.5 22V58M510.5 24V58M511.5 20V60M512.5 20V65M513.5 12V66M514.5 24V64M515.5 19V59M516.5 27V59M517.5 11V64M518.5 18V71M519.5 13V60M520.5 19V72M521.5 23V62M522.5 23V67M523.5 30V60M524.5 24V61M525.5 10V73M526.5 20V62M527.5 19V58M528.5 27V68M529.5 14V60M530.5 24V59M531.5 23V62M532.5 18V65M533.5 16V64M534.5 8V60M535.5 23V64M536.5 24V82M537.5 21V62M538.5 27V66M539.5 22V70M540.5 21V60M541.5 23V65M542.5 30V59M543.5 21V56M544.5 29V55M545.5 26V54M546.5 26V54M547.5 23V53M548.5 29V55M549.5 20V59M550.5 21V60M551.5 20V57M552.5 29V63M553.5 30V66M554.5 32V62M555.5 31V79M556.5 28V61M557.5 28V60M558.5 28V62M559.5 23V60M560.5 26V71M561.5 21V58M562.5 25V58M563.5 18V64M564.5 22V63M565.5 15V65M566.5 19V57M567.5 25V64M568.5 17V64M569.5 16V65M570.5 20V76M571.5 27V64M572.5 20V67M573.5 13V69M574.5 21V74M575.5 23V69M576.5 20V68M577.5 17V66M578.5 24V72M579.5 23V63M580.5 22V70M581.5 23V67M582.5 19V56M583.5 17V63M584.5 18V64M585.5 21V62M586.5 10V60M587.5 24V59M588.5 21V74M589.5 23V58M590.5 32V68M591.5 27V57M592.5 26V66M593.5 27V61M594.5 14V61M595.5 15V60M596.5 26V75M597.5 18V60M598.5 10V64M599.5 20V58M600.5 21V56M601.5 29V67M602.5 13V67M603.5 21V56M604.5 26V60M605.5 27V69M606.5 31V63M607.5 31V63M608.5 32V65M609.5 31V59M610.5 29V63M611.5 23V70" stroke="#00ff00" stroke-width="1" shape-rendering="crispEdges"/><path d="M148.5 25V62M149.5 26V58M150.5 25V62M151.5 26V56M152.5 17V58M153.5 14V60M154.5 12V63M155.5 11V57M156.5 23V55M157.5 18V62M158.5 22V57M159.5 21V59M160.5 24V60M161.5 18V59M162.5 11V59M163.5 14V56M164.5 25V57M165.5 12V57M166.5 27V58M167.5 25V53M168.5 23V61M169.5 27V63M170.5 24V74M171.5 13V63M172.5 16V70M173.5 17V63M174.5 18V74M175.5 29V64M176.5 21V66M177.5 28V67M178.5 26V74M179.5 30V67M180.5 33V77M181.5 30V65M182.5 31V63M183.5 30V61M184.5 32V64M185.5 30V68M186.5 27V63M187.5 29V70M188.5 30V81M189.5 22V81M190.5 12V72M191.5 27V80M192.5 10V70M193.5 21V81M194.5 18V60M195.5 14V69M196.5 16V64M197.5 26V61M198.5 25V62M199.5 23V57M200.5 19V59M201.5 26V57M202.5 25V56M203.5 14V63M204.5 25V52M205.5 19V54M206.5 2V57M207.5 19V61M208.5 1V56M209.5 13V54M210.5 21V59M211.5 20V65M212.5 14V64M213.5 17V62M214.5 27V71M215.5 26V58M216.5 28V58M217.5 24V72M218.5 28V56M219.5 29V56M220.5 24V57M221.5 24V65M222.5 25V59M223.5 30V59M224.5 29V61M225.5 25V63M226.5 25V66M227.5 23V64M228.5 25V64M229.5 30V74M230.5 33V83M231.5 34V72M232.5 30V66M233.5 30V69M234.5 29V78M235.5 28V77M236.5 32V62M237.5 25V67M238.5 29V80M239.5 14V66M240.5 19V69M241.5 15V63M242.5 23V58M243.5 21V56M244.5 22V60M245.5 9V58M246.5 14V60M247.5 19V62M248.5 13V61M249.5 10V56M250.5 28V72M251.5 18V61M252.5 25V66M253.5 26V62M254.5 15V59M255.5 21V56M256.5 18V60M257.5 19V53M258.5 11V54M259.5 10V54M260.5 23V53M261.5 21V57M262.5 25V56M263.5 21V53M264.5 25V57M265.5 30V60M266.5 30V61M267.5 24V62M268.5 31V68M269.5 20V72M270.5 30V68M271.5 33V69M272.5 26V73M273.5 20V62M274.5 29V66M275.5 21V62M276.5 18V65M277.5 25V68M278.5 29V60M279.5 23V68M280.5 31V67M281.5 29V72M282.5 31V72M283.5 26V66M284.5 30V64M285.5 27V65M286.5 28V66M287.5 17V76M288.5 25V86M289.5 22V67M290.5 13V69M291.5 24V70M292.5 22V67M293.5 21V68M294.5 13V68M295.5 3V67M296.5 13V58M297.5 24V58M298.5 26V55M299.5 25V59M300.5 19V58M301.5 18V57M302.5 27V54M303.5 22V52M304.5 20V57M305.5 15V56M306.5 21V58M307.5 16V54M308.5 25V57M309.5 21V55M310.5 16V59M311.5 21V58M312.5 28V57M313.5 25V72M314.5 27V62M315.5 32V60M316.5 26V69M317.5 22V63M318.5 31V59M319.5 34V63M320.5 33V66M321.5 31V66M322.5 31V62M323.5 30V70M324.5 31V66M325.5 28V71M326.5 21V68M327.5 13V68M328.5 23V73M329.5 27V76M330.5 22V72M331.5 13V76M332.5 25V65M333.5 23V68M334.5 23V82M335.5 28V62M336.5 25V70M337.5 23V68M338.5 24V59M339.5 20V62M340.5 20V61M341.5 22V69M342.5 0V72M343.5 12V70M344.5 21V65M345.5 0V65M346.5 21V62M347.5 9V69M348.5 17V65M349.5 9V65M350.5 25V62M351.5 8V54M352.5 10V55M353.5 25V57M354.5 27V53M355.5 22V52M356.5 26V52M357.5 23V51M358.5 18V54M359.5 27V58M360.5 25V57M361.5 11V56M362.5 20V64M363.5 22V59M364.5 23V63M365.5 32V74M366.5 30V65M367.5 25V63M368.5 33V64M369.5 32V69M370.5 29V61M371.5 34V76M372.5 29V76M373.5 29V63M374.5 25V66M375.5 22V61M376.5 24V71M377.5 21V61M378.5 24V68M379.5 28V68M380.5 26V69M381.5 20V63M382.5 23V78M383.5 21V73M384.5 25V67M385.5 18V77M386.5 17V67M387.5 24V73M388.5 26V70M389.5 23V68M390.5 15V58M391.5 15V68M392.5 23V57M393.5 12V60M394.5 13V63M395.5 8V59M396.5 0V57M397.5 21V55M398.5 26V56M399.5 21V55M400.5 21V60M401.5 26V60M402.5 30V57M403.5 28V63M404.5 31V60M405.5 31V61M406.5 27V58M407.5 20V65M408.5 31V61M409.5 23V54M410.5 27V56M411.5 26V56M412.5 27V56M413.5 27V57M414.5 25V61M415.5 25V59M416.5 24V71M417.5 28V59M418.5 33V66M419.5 29V70M420.5 30V69M421.5 28V76M422.5 31V72M423.5 28V66M424.5 25V80M425.5 23V75M426.5 23V63M427.5 17V76M428.5 17V71M429.5 14V71M430.5 12V62M431.5 16V68M432.5 23V72M433.5 13V69M434.5 14V70M435.5 4V69M436.5 26V64M437.5 25V58M438.5 18V64M439.5 22V63M440.5 20V62M441.5 23V70M442.5 19V64M443.5 18V68M444.5 26V66M445.5 15V64M446.5 19V63M447.5 23V62" stroke="#00ffff" stroke-width="1" shape-rendering="crispEdges"/><path d="M0 21.5H612" stroke="#a4a4a4" stroke-width="1" stroke-dasharray="3 3" shape-rendering="crispEdges"/><path d="M0 64.5H612" stroke="#a4a4a4" stroke-width="1" stroke-dasharray="3 3" shape-rendering="crispEdges"/><rect x="0" y="86" width="612" height="1" fill="#a0a0a0"/><rect x="0" y="87" width="612" height="1" fill="#fff"/><rect x="0" y="88" width="612" height="86" fill="#000"/><rect x="148" y="88" width="300" height="86" fill="#0000ff"/><path d="M0 131.5H612" stroke="#808080" stroke-width="1"/><path d="M0.5 105V146M1.5 93V144M2.5 88V145M3.5 112V146M4.5 110V151M5.5 108V159M6.5 112V153M7.5 107V144M8.5 108V147M9.5 102V144M10.5 115V149M11.5 119V144M12.5 109V143M13.5 118V151M14.5 118V152M15.5 121V145M16.5 121V148M17.5 119V155M18.5 113V162M19.5 112V156M20.5 114V171M21.5 112V158M22.5 109V170M23.5 118V164M24.5 115V154M25.5 115V152M26.5 105V160M27.5 107V156M28.5 115V174M29.5 111V155M30.5 111V162M31.5 117V147M32.5 117V155M33.5 113V147M34.5 105V153M35.5 101V148M36.5 101V155M37.5 100V151M38.5 90V160M39.5 102V148M40.5 109V158M41.5 101V150M42.5 111V155M43.5 101V151M44.5 110V148M45.5 96V160M46.5 99V148M47.5 114V149M48.5 112V145M49.5 106V153M50.5 113V140M51.5 106V141M52.5 97V139M53.5 116V139M54.5 115V145M55.5 109V140M56.5 111V145M57.5 109V148M58.5 110V148M59.5 107V152M60.5 116V147M61.5 114V152M62.5 121V151M63.5 122V146M64.5 122V148M65.5 122V150M66.5 118V150M67.5 109V152M68.5 114V159M69.5 115V154M70.5 105V153M71.5 114V155M72.5 113V151M73.5 101V159M74.5 114V159M75.5 109V153M76.5 99V152M77.5 111V152M78.5 107V158M79.5 110V162M80.5 118V163M81.5 116V160M82.5 114V151M83.5 113V153M84.5 112V168M85.5 110V156M86.5 107V150M87.5 103V154M88.5 110V155M89.5 106V150M90.5 106V142M91.5 106V142M92.5 100V145M93.5 109V143M94.5 103V153M95.5 107V144M96.5 112V145M97.5 114V151M98.5 111V152M99.5 114V152M100.5 115V150M101.5 109V151M102.5 108V148M103.5 106V143M104.5 111V141M105.5 114V144M106.5 110V148M107.5 111V142M108.5 112V151M109.5 119V141M110.5 114V148M111.5 115V144M112.5 116V151M113.5 120V163M114.5 118V155M115.5 116V149M116.5 117V149M117.5 120V174M118.5 114V155M119.5 117V155M120.5 116V159M121.5 102V160M122.5 113V164M123.5 110V160M124.5 101V154M125.5 112V161M126.5 111V153M127.5 110V161M128.5 107V160M129.5 106V156M130.5 111V151M131.5 106V159M132.5 109V152M133.5 103V151M134.5 104V150M135.5 100V159M136.5 107V166M137.5 104V153M138.5 110V154M139.5 107V154M140.5 102V149M141.5 108V149M142.5 103V151M143.5 115V149M144.5 107V144M145.5 113V147M146.5 111V142M147.5 114V145M448.5 111V141M449.5 113V147M450.5 101V141M451.5 111V148M452.5 114V144M453.5 97V153M454.5 103V157M455.5 109V152M456.5 106V150M457.5 103V153M458.5 107V150M459.5 114V155M460.5 109V152M461.5 102V164M462.5 107V152M463.5 105V158M464.5 112V154M465.5 105V161M466.5 110V148M467.5 111V151M468.5 116V153M469.5 119V153M470.5 111V151M471.5 120V146M472.5 114V145M473.5 114V154M474.5 111V146M475.5 113V157M476.5 118V156M477.5 109V154M478.5 115V169M479.5 114V166M480.5 112V159M481.5 108V150M482.5 115V148M483.5 108V154M484.5 116V146M485.5 119V145M486.5 115V144M487.5 118V151M488.5 113V145M489.5 118V147M490.5 113V149M491.5 113V146M492.5 108V152M493.5 116V145M494.5 114V158M495.5 106V153M496.5 111V156M497.5 108V147M498.5 90V167M499.5 102V156M500.5 106V155M501.5 113V151M502.5 109V151M503.5 110V150M504.5 110V149M505.5 110V148M506.5 113V151M507.5 113V151M508.5 112V153M509.5 97V155M510.5 114V150M511.5 102V146M512.5 104V161M513.5 113V152M514.5 113V149M515.5 112V160M516.5 107V154M517.5 113V164M518.5 102V152M519.5 115V160M520.5 115V167M521.5 120V159M522.5 117V149M523.5 119V154M524.5 117V152M525.5 116V155M526.5 116V151M527.5 115V162M528.5 111V148M529.5 103V153M530.5 106V144M531.5 109V146M532.5 104V153M533.5 108V157M534.5 116V156M535.5 108V157M536.5 116V154M537.5 116V165M538.5 111V158M539.5 115V146M540.5 112V147M541.5 117V158M542.5 109V150M543.5 113V149M544.5 115V149M545.5 99V150M546.5 101V148M547.5 107V150M548.5 102V146M549.5 112V144M550.5 108V148M551.5 109V148M552.5 107V153M553.5 106V153M554.5 109V155M555.5 110V158M556.5 115V157M557.5 116V151M558.5 111V160M559.5 112V157M560.5 118V156M561.5 107V157M562.5 110V145M563.5 110V146M564.5 116V152M565.5 113V148M566.5 107V153M567.5 112V156M568.5 111V163M569.5 102V151M570.5 116V158M571.5 115V155M572.5 116V148M573.5 112V156M574.5 118V159M575.5 113V152M576.5 115V156M577.5 112V158M578.5 109V168M579.5 109V165M580.5 106V151M581.5 111V152M582.5 106V156M583.5 104V145M584.5 114V150M585.5 113V146M586.5 115V149M587.5 115V151M588.5 110V160M589.5 102V153M590.5 114V153M591.5 113V149M592.5 102V148M593.5 111V148M594.5 113V148M595.5 112V156M596.5 99V149M597.5 102V165M598.5 113V151M599.5 103V148M600.5 115V152M601.5 111V156M602.5 97V150M603.5 109V147M604.5 103V160M605.5 105V146M606.5 110V154M607.5 118V149M608.5 109V157M609.5 114V156M610.5 115V156M611.5 114V156" stroke="#00ff00" stroke-width="1" shape-rendering="crispEdges"/><path d="M148.5 118V141M149.5 114V141M150.5 117V146M151.5 114V147M152.5 119V153M153.5 116V155M154.5 113V150M155.5 117V147M156.5 119V154M157.5 113V155M158.5 112V148M159.5 119V147M160.5 111V148M161.5 116V153M162.5 118V153M163.5 116V156M164.5 114V162M165.5 113V152M166.5 113V146M167.5 115V148M168.5 112V157M169.5 112V156M170.5 110V160M171.5 104V157M172.5 108V152M173.5 108V173M174.5 111V158M175.5 106V165M176.5 100V166M177.5 100V165M178.5 92V168M179.5 102V157M180.5 105V148M181.5 104V148M182.5 106V163M183.5 109V153M184.5 105V154M185.5 105V147M186.5 112V146M187.5 106V148M188.5 112V153M189.5 104V148M190.5 112V150M191.5 104V146M192.5 107V153M193.5 114V151M194.5 116V148M195.5 114V146M196.5 116V148M197.5 118V145M198.5 120V146M199.5 117V147M200.5 120V144M201.5 121V141M202.5 113V151M203.5 115V140M204.5 118V144M205.5 118V141M206.5 110V144M207.5 116V150M208.5 112V144M209.5 113V149M210.5 111V155M211.5 118V158M212.5 114V152M213.5 109V152M214.5 112V160M215.5 103V153M216.5 119V148M217.5 114V158M218.5 112V162M219.5 100V157M220.5 106V153M221.5 106V153M222.5 103V150M223.5 89V155M224.5 101V151M225.5 108V158M226.5 98V152M227.5 98V160M228.5 101V155M229.5 99V163M230.5 109V151M231.5 104V162M232.5 96V174M233.5 112V159M234.5 109V153M235.5 114V153M236.5 118V163M237.5 115V147M238.5 104V153M239.5 104V159M240.5 109V143M241.5 112V148M242.5 113V139M243.5 114V145M244.5 117V146M245.5 119V145M246.5 113V152M247.5 118V148M248.5 122V143M249.5 118V143M250.5 118V144M251.5 119V144M252.5 112V147M253.5 115V146M254.5 115V151M255.5 113V147M256.5 110V152M257.5 110V157M258.5 109V153M259.5 100V149M260.5 111V147M261.5 108V145M262.5 113V153M263.5 105V151M264.5 109V154M265.5 105V156M266.5 114V160M267.5 108V173M268.5 105V166M269.5 115V166M270.5 107V152M271.5 107V174M272.5 103V163M273.5 110V155M274.5 109V161M275.5 100V158M276.5 110V162M277.5 105V154M278.5 104V153M279.5 102V154M280.5 107V149M281.5 105V156M282.5 116V149M283.5 117V151M284.5 111V155M285.5 118V162M286.5 120V151M287.5 115V147M288.5 113V145M289.5 114V146M290.5 119V149M291.5 113V157M292.5 118V145M293.5 113V147M294.5 117V148M295.5 117V144M296.5 114V146M297.5 120V148M298.5 117V143M299.5 116V142M300.5 115V140M301.5 117V141M302.5 120V144M303.5 118V147M304.5 119V157M305.5 112V148M306.5 108V162M307.5 104V157M308.5 108V156M309.5 93V168M310.5 108V159M311.5 103V154M312.5 98V151M313.5 111V155M314.5 100V167M315.5 107V149M316.5 113V156M317.5 112V168M318.5 115V164M319.5 114V149M320.5 115V160M321.5 110V159M322.5 113V154M323.5 115V162M324.5 94V160M325.5 105V174M326.5 104V169M327.5 107V161M328.5 102V157M329.5 113V157M330.5 113V162M331.5 112V162M332.5 115V152M333.5 115V147M334.5 116V150M335.5 116V147M336.5 119V150M337.5 122V148M338.5 120V146M339.5 115V141M340.5 116V152M341.5 117V143M342.5 112V144M343.5 112V143M344.5 111V144M345.5 117V148M346.5 115V147M347.5 115V146M348.5 103V147M349.5 112V149M350.5 113V147M351.5 118V148M352.5 113V145M353.5 111V154M354.5 111V146M355.5 103V143M356.5 108V146M357.5 105V147M358.5 93V145M359.5 111V152M360.5 100V153M361.5 111V167M362.5 101V149M363.5 92V155M364.5 111V159M365.5 105V160M366.5 115V162M367.5 102V154M368.5 106V156M369.5 106V160M370.5 105V174M371.5 117V150M372.5 117V173M373.5 112V156M374.5 115V155M375.5 105V158M376.5 108V150M377.5 109V154M378.5 113V153M379.5 99V148M380.5 112V154M381.5 117V146M382.5 117V149M383.5 115V165M384.5 121V166M385.5 118V150M386.5 119V150M387.5 113V145M388.5 120V152M389.5 120V142M390.5 114V147M391.5 120V143M392.5 115V146M393.5 111V139M394.5 112V141M395.5 113V144M396.5 112V140M397.5 109V144M398.5 107V150M399.5 111V145M400.5 106V144M401.5 107V153M402.5 111V154M403.5 108V146M404.5 112V164M405.5 108V154M406.5 112V153M407.5 109V166M408.5 104V156M409.5 103V155M410.5 101V146M411.5 99V152M412.5 101V153M413.5 98V148M414.5 111V147M415.5 103V158M416.5 106V159M417.5 104V152M418.5 110V153M419.5 114V161M420.5 119V171M421.5 117V173M422.5 117V160M423.5 113V167M424.5 105V159M425.5 116V157M426.5 118V158M427.5 113V151M428.5 105V155M429.5 110V157M430.5 107V145M431.5 116V152M432.5 114V152M433.5 118V145M434.5 118V152M435.5 119V146M436.5 116V150M437.5 116V149M438.5 118V144M439.5 120V147M440.5 114V151M441.5 118V147M442.5 115V150M443.5 116V149M444.5 114V148M445.5 103V144M446.5 112V145M447.5 103V148" stroke="#00ffff" stroke-width="1" shape-rendering="crispEdges"/><path d="M0 109.5H612" stroke="#a4a4a4" stroke-width="1" stroke-dasharray="3 3" shape-rendering="crispEdges"/><path d="M0 152.5H612" stroke="#a4a4a4" stroke-width="1" stroke-dasharray="3 3" shape-rendering="crispEdges"/><rect x="448" y="0" width="1" height="174" fill="#ffff00"/><rect x="448" y="5" width="1" height="58" fill="#ff0000"/><rect x="448" y="111" width="1" height="30" fill="#ff0000"/><path d="M444.5 0 L452.5 0 L448.5 5 Z" fill="#ffff00"/><path d="M444.5 174 L452.5 174 L448.5 169 Z" fill="#ffff00"/></svg><div style="position:absolute;left:0px;top:95px;width:41px;height:1px;background:#a0a0a0"></div><div style="position:absolute;left:0px;top:96px;width:41px;height:1px;background:#fff"></div><div style="position:absolute;left:0px;top:183px;width:41px;height:1px;background:#a0a0a0"></div><div style="position:absolute;left:0px;top:184px;width:41px;height:1px;background:#fff"></div><svg style="position:absolute;left:41px;top:184px;" width="612" height="20" viewBox="0 0 612 20"><rect x="6" y="0" width="1" height="2" fill="#000"/><rect x="14" y="0" width="1" height="2" fill="#000"/><rect x="21" y="0" width="1" height="2" fill="#000"/><rect x="29" y="0" width="1" height="5" fill="#000"/><rect x="37" y="0" width="1" height="2" fill="#000"/><rect x="44" y="0" width="1" height="2" fill="#000"/><rect x="52" y="0" width="1" height="2" fill="#000"/><rect x="60" y="0" width="1" height="2" fill="#000"/><rect x="67" y="0" width="1" height="2" fill="#000"/><rect x="75" y="0" width="1" height="2" fill="#000"/><rect x="83" y="0" width="1" height="2" fill="#000"/><rect x="90" y="0" width="1" height="2" fill="#000"/><rect x="98" y="0" width="1" height="2" fill="#000"/><rect x="106" y="0" width="1" height="5" fill="#000"/><rect x="113" y="0" width="1" height="2" fill="#000"/><rect x="121" y="0" width="1" height="2" fill="#000"/><rect x="129" y="0" width="1" height="2" fill="#000"/><rect x="136" y="0" width="1" height="2" fill="#000"/><rect x="144" y="0" width="1" height="2" fill="#000"/><rect x="152" y="0" width="1" height="2" fill="#000"/><rect x="159" y="0" width="1" height="2" fill="#000"/><rect x="167" y="0" width="1" height="2" fill="#000"/><rect x="175" y="0" width="1" height="2" fill="#000"/><rect x="182" y="0" width="1" height="5" fill="#000"/><rect x="190" y="0" width="1" height="2" fill="#000"/><rect x="198" y="0" width="1" height="2" fill="#000"/><rect x="205" y="0" width="1" height="2" fill="#000"/><rect x="213" y="0" width="1" height="2" fill="#000"/><rect x="221" y="0" width="1" height="2" fill="#000"/><rect x="228" y="0" width="1" height="2" fill="#000"/><rect x="236" y="0" width="1" height="2" fill="#000"/><rect x="244" y="0" width="1" height="2" fill="#000"/><rect x="251" y="0" width="1" height="2" fill="#000"/><rect x="259" y="0" width="1" height="5" fill="#000"/><rect x="267" y="0" width="1" height="2" fill="#000"/><rect x="274" y="0" width="1" height="2" fill="#000"/><rect x="282" y="0" width="1" height="2" fill="#000"/><rect x="290" y="0" width="1" height="2" fill="#000"/><rect x="297" y="0" width="1" height="2" fill="#000"/><rect x="305" y="0" width="1" height="2" fill="#000"/><rect x="313" y="0" width="1" height="2" fill="#000"/><rect x="320" y="0" width="1" height="2" fill="#000"/><rect x="328" y="0" width="1" height="2" fill="#000"/><rect x="336" y="0" width="1" height="5" fill="#000"/><rect x="343" y="0" width="1" height="2" fill="#000"/><rect x="351" y="0" width="1" height="2" fill="#000"/><rect x="359" y="0" width="1" height="2" fill="#000"/><rect x="366" y="0" width="1" height="2" fill="#000"/><rect x="374" y="0" width="1" height="2" fill="#000"/><rect x="382" y="0" width="1" height="2" fill="#000"/><rect x="389" y="0" width="1" height="2" fill="#000"/><rect x="397" y="0" width="1" height="2" fill="#000"/><rect x="405" y="0" width="1" height="2" fill="#000"/><rect x="412" y="0" width="1" height="5" fill="#000"/><rect x="420" y="0" width="1" height="2" fill="#000"/><rect x="428" y="0" width="1" height="2" fill="#000"/><rect x="436" y="0" width="1" height="2" fill="#000"/><rect x="443" y="0" width="1" height="2" fill="#000"/><rect x="451" y="0" width="1" height="2" fill="#000"/><rect x="459" y="0" width="1" height="2" fill="#000"/><rect x="466" y="0" width="1" height="2" fill="#000"/><rect x="474" y="0" width="1" height="2" fill="#000"/><rect x="482" y="0" width="1" height="2" fill="#000"/><rect x="489" y="0" width="1" height="5" fill="#000"/><rect x="497" y="0" width="1" height="2" fill="#000"/><rect x="505" y="0" width="1" height="2" fill="#000"/><rect x="512" y="0" width="1" height="2" fill="#000"/><rect x="520" y="0" width="1" height="2" fill="#000"/><rect x="528" y="0" width="1" height="2" fill="#000"/><rect x="535" y="0" width="1" height="2" fill="#000"/><rect x="543" y="0" width="1" height="2" fill="#000"/><rect x="551" y="0" width="1" height="2" fill="#000"/><rect x="558" y="0" width="1" height="2" fill="#000"/><rect x="566" y="0" width="1" height="5" fill="#000"/><rect x="574" y="0" width="1" height="2" fill="#000"/><rect x="581" y="0" width="1" height="2" fill="#000"/><rect x="589" y="0" width="1" height="2" fill="#000"/><rect x="597" y="0" width="1" height="2" fill="#000"/><rect x="604" y="0" width="1" height="2" fill="#000"/><rect x="612" y="0" width="1" height="2" fill="#000"/></svg><div style="position:absolute;left:41px;top:184px;width:612px;height:20px;overflow:hidden"><div style="position:absolute;left:-48px;top:6px;font-size:11px;line-height:13px;color:#000;white-space:nowrap;letter-spacing:-0.1px">00:02:03</div><div style="position:absolute;left:29px;top:6px;font-size:11px;line-height:13px;color:#000;white-space:nowrap;letter-spacing:-0.1px">00:02:04</div><div style="position:absolute;left:106px;top:6px;font-size:11px;line-height:13px;color:#000;white-space:nowrap;letter-spacing:-0.1px">00:02:06</div><div style="position:absolute;left:182px;top:6px;font-size:11px;line-height:13px;color:#000;white-space:nowrap;letter-spacing:-0.1px">00:02:07</div><div style="position:absolute;left:259px;top:6px;font-size:11px;line-height:13px;color:#000;white-space:nowrap;letter-spacing:-0.1px">00:02:09</div><div style="position:absolute;left:336px;top:6px;font-size:11px;line-height:13px;color:#000;white-space:nowrap;letter-spacing:-0.1px">00:02:10</div><div style="position:absolute;left:412px;top:6px;font-size:11px;line-height:13px;color:#000;white-space:nowrap;letter-spacing:-0.1px">00:02:12</div><div style="position:absolute;left:489px;top:6px;font-size:11px;line-height:13px;color:#000;white-space:nowrap;letter-spacing:-0.1px">00:02:13</div><div style="position:absolute;left:566px;top:6px;font-size:11px;line-height:13px;color:#000;white-space:nowrap;letter-spacing:-0.1px">00:02:15</div></div><div style="position:absolute;left:0px;top:204px;width:653px;height:1px;background:#a0a0a0"></div><div style="position:absolute;left:0px;top:205px;width:653px;height:1px;background:#fff"></div><div class="btn" style="left:1px;top:209px;width:23px;height:23px"></div><svg style="position:absolute;left:1px;top:209px;" width="22" height="22" viewBox="0 0 22 22"><path d="M13.280000000000001 12.879999999999999 L17.5 17.2" stroke="#3c3c3c" stroke-width="2.8" stroke-linecap="round"/><circle cx="10.4" cy="10" r="4.8" fill="url(#gLens)" stroke="#3c3c3c" stroke-width="1.5"/><path d="M7.4 10 H13.4 M10.4 7 V13" stroke="#000" stroke-width="1.5"/><path d="M18.5 5.5 V12.5 M16.9 7.3 L18.5 5.5 L20.1 7.3 M16.9 10.7 L18.5 12.5 L20.1 10.7" stroke="#000" stroke-width="1.3" fill="none"/></svg><div class="btn" style="left:25px;top:209px;width:23px;height:23px"></div><svg style="position:absolute;left:25px;top:209px;" width="22" height="22" viewBox="0 0 22 22"><path d="M13.280000000000001 12.879999999999999 L17.5 17.2" stroke="#3c3c3c" stroke-width="2.8" stroke-linecap="round"/><circle cx="10.4" cy="10" r="4.8" fill="url(#gLens)" stroke="#3c3c3c" stroke-width="1.5"/><path d="M7.4 10 H13.4" stroke="#000" stroke-width="1.5"/><path d="M18.5 5.5 V12.5 M16.9 7.3 L18.5 5.5 L20.1 7.3 M16.9 10.7 L18.5 12.5 L20.1 10.7" stroke="#000" stroke-width="1.3" fill="none"/></svg><div class="btn" style="left:604px;top:209px;width:23px;height:23px"></div><svg style="position:absolute;left:604px;top:209px;" width="22" height="22" viewBox="0 0 22 22"><path d="M13.280000000000001 12.879999999999999 L17.5 17.2" stroke="#3c3c3c" stroke-width="2.8" stroke-linecap="round"/><circle cx="10.4" cy="10" r="4.8" fill="url(#gLens)" stroke="#3c3c3c" stroke-width="1.5"/><path d="M7.4 10 H13.4 M10.4 7 V13" stroke="#000" stroke-width="1.5"/><path d="M6.5 18.3 H13.5 M8.3 16.7 L6.5 18.3 L8.3 19.9 M11.7 16.7 L13.5 18.3 L11.7 19.9" stroke="#000" stroke-width="1.1" fill="none"/></svg><div class="btn" style="left:628px;top:209px;width:23px;height:23px"></div><svg style="position:absolute;left:628px;top:209px;" width="22" height="22" viewBox="0 0 22 22"><path d="M13.280000000000001 12.879999999999999 L17.5 17.2" stroke="#3c3c3c" stroke-width="2.8" stroke-linecap="round"/><circle cx="10.4" cy="10" r="4.8" fill="url(#gLens)" stroke="#3c3c3c" stroke-width="1.5"/><path d="M7.4 10 H13.4" stroke="#000" stroke-width="1.5"/><path d="M6.5 18.3 H13.5 M8.3 16.7 L6.5 18.3 L8.3 19.9 M11.7 16.7 L13.5 18.3 L11.7 19.9" stroke="#000" stroke-width="1.1" fill="none"/></svg><div style="position:absolute;left:56px;top:211px;width:540px;height:18px;background:linear-gradient(90deg,#e6e6e6,#f0f0f0 3%,#f0f0f0 97%,#e6e6e6);border-top:1px solid #e8e8e8;box-sizing:border-box"></div><svg style="position:absolute;left:56px;top:211px;" width="540" height="18" viewBox="0 0 540 18"><path d="M7 9 L10 6 V12 Z" fill="#505050"/><path d="M533 9 L530 6 V12 Z" fill="#505050"/></svg><div style="position:absolute;left:312px;top:211px;width:19px;height:18px;box-sizing:border-box;border:1px solid #9a9a9a;border-radius:2px;background:linear-gradient(#f3f3f3,#e6e6e6 50%,#d6d6d6 51%,#cfcfcf)"></div><svg style="position:absolute;left:312px;top:211px;" width="19" height="18" viewBox="0 0 19 18"><rect x="6" y="6" width="1" height="6" fill="#606060"/><rect x="8" y="6" width="1" height="6" fill="#606060"/><rect x="10" y="6" width="1" height="6" fill="#606060"/></svg><div class="btn" style="left:1px;top:236px;width:31px;height:23px"></div><svg style="position:absolute;left:1px;top:236px;" width="30" height="22" viewBox="0 0 30 22"><path d="M12.5 8.0 Q12.5 7.0 13.5 7.0 H16.75 L21.0 12.25 L16.75 17.5 H13.5 Q12.5 17.5 12.5 16.5 Z" fill="url(#gPlay)" stroke="#3a3a3a" stroke-width="1" stroke-linejoin="round"/></svg><div class="btn" style="left:33px;top:236px;width:31px;height:23px"></div><svg style="position:absolute;left:33px;top:236px;" width="30" height="22" viewBox="0 0 30 22"><rect x="10" y="6.5" width="2.2" height="11.5" fill="#303030"/><path d="M13.5 8.0 Q13.5 7.0 14.5 7.0 H17.75 L22.0 12.25 L17.75 17.5 H14.5 Q13.5 17.5 13.5 16.5 Z" fill="url(#gPlay)" stroke="#3a3a3a" stroke-width="1" stroke-linejoin="round"/></svg><div class="btn" style="left:65px;top:236px;width:31px;height:23px"></div><svg style="position:absolute;left:65px;top:236px;" width="30" height="22" viewBox="0 0 30 22"><rect x="10.5" y="6.5" width="11" height="11" rx="2.2" fill="url(#gStop)" stroke="#3a3a3a"/><path d="M13 8.5 H19" stroke="#fff" stroke-width=".8" stroke-dasharray="1 1"/></svg><div class="btn" style="left:97px;top:236px;width:31px;height:23px"></div><svg style="position:absolute;left:97px;top:236px;" width="30" height="22" viewBox="0 0 30 22"><rect x="9.5" y="6.5" width="3" height="11" rx="1" fill="url(#gGray)" stroke="#3a3a3a"/><path d="M22.5 6.5 V17.5 L13.5 12 Z" fill="url(#gGray)" stroke="#3a3a3a" stroke-linejoin="round"/></svg><div class="btn" style="left:129px;top:236px;width:31px;height:23px"></div><svg style="position:absolute;left:129px;top:236px;" width="30" height="22" viewBox="0 0 30 22"><path d="M9.5 6.5 V17.5 L18.5 12 Z" fill="url(#gGray)" stroke="#3a3a3a" stroke-linejoin="round"/><rect x="19.5" y="6.5" width="3" height="11" rx="1" fill="url(#gGray)" stroke="#3a3a3a"/></svg><div class="box" style="left:359px;top:236px;width:70px;height:22px">1024:1</div><div class="box" style="left:432px;top:236px;width:70px;height:22px">00:00:05</div><div class="box" style="left:506px;top:236px;width:70px;height:22px">00:02:07</div><div class="box" style="left:580px;top:236px;width:70px;height:22px">00:02:12</div></div></div><div style="position:absolute;left:12px;top:122px;width:859px;height:300px;overflow:hidden"><div style="position:absolute;left:0px;top:0px;width:859px;height:300px;box-sizing:border-box;border:1px solid #4f5660;border-radius:5px 5px 0 0;background:#d7e5f2"></div><div style="position:absolute;left:1px;top:1px;width:857px;height:29px;border-radius:4px 4px 0 0;background:linear-gradient(180deg,#bccfe1 0px,#c9d9e9 14px,#d8e6f3 29px)"></div><div style="position:absolute;left:1px;top:1px;width:857px;height:298px;box-sizing:border-box;border:1px solid rgba(255,255,255,.55);border-radius:4px 4px 0 0"></div><svg style="position:absolute;left:10px;top:10px;" width="16" height="16" viewBox="0 0 16 16"><path d="M3.5 0.5 H12 L15.5 4 V15.5 H3.5 Z" fill="#fbf8f0" stroke="#6a6060"/>
<rect x="0" y="1" width="9.5" height="4" fill="#0e7a3a"/><rect x="0" y="1" width="1" height="4" fill="#111"/><rect x="2" y="2" width="1.4" height="2" fill="#fff"/><rect x="6" y="2" width="1.4" height="2" fill="#fff"/>
<path d="M3.5 9 L4.5 8 L5.5 11 L6.5 6 L7.5 12 L8.5 6.5 L9.5 11 L10.5 7.5 L11.5 10 L12.5 8 L14.5 9" fill="none" stroke="#1020c0" stroke-width="0.9"/></svg><div style="position:absolute;left:30px;top:12px;font-size:12px;line-height:14px;color:#2a2a2a;white-space:nowrap;letter-spacing:-0.2px">Voice Stream1.wav</div><div style="position:absolute;left:752px;top:10px;width:31px;height:17px;box-sizing:border-box;border:1px solid #8f9db0;border-radius:3px;background:linear-gradient(#e9eff7 0%,#dce6f1 45%,#cfdcea 50%,#d8e3ef 100%);box-shadow:inset 0 0 0 1px rgba(255,255,255,.45)"></div><div style="position:absolute;left:785px;top:10px;width:31px;height:17px;box-sizing:border-box;border:1px solid #8f9db0;border-radius:3px;background:linear-gradient(#e9eff7 0%,#dce6f1 45%,#cfdcea 50%,#d8e3ef 100%);box-shadow:inset 0 0 0 1px rgba(255,255,255,.45)"></div><div style="position:absolute;left:818px;top:10px;width:31px;height:17px;box-sizing:border-box;border:1px solid #8f9db0;border-radius:3px;background:linear-gradient(#e9eff7 0%,#dce6f1 45%,#cfdcea 50%,#d8e3ef 100%);box-shadow:inset 0 0 0 1px rgba(255,255,255,.45)"></div><svg style="position:absolute;left:752px;top:10px;" width="97" height="17" viewBox="0 0 97 17"><rect x="10.5" y="8.5" width="10" height="3.6" rx="1.5" fill="#fff" stroke="#3e4450" stroke-width="1"/>
<rect x="43.5" y="4.5" width="10" height="8" rx="1" fill="#fff" stroke="#3e4450" stroke-width="1"/><rect x="46.5" y="7.5" width="4" height="2" fill="#b8c2d0" stroke="#3e4450" stroke-width="1"/>
<path d="M78.8 6.2 L84.2 10.8 M84.2 6.2 L78.8 10.8" stroke="#3e4450" stroke-width="4.2" stroke-linecap="square"/><path d="M78.8 6.2 L84.2 10.8 M84.2 6.2 L78.8 10.8" stroke="#fff" stroke-width="2" stroke-linecap="square"/></svg><div style="position:absolute;left:8px;top:30px;width:843px;height:262px;overflow:hidden"><div style="position:absolute;left:0px;top:0px;width:843px;height:262px;background:#f0f0f0"></div><div style="position:absolute;left:0px;top:7px;width:843px;height:1px;background:#a0a0a0"></div><div style="position:absolute;left:0px;top:8px;width:843px;height:1px;background:#fff"></div><svg style="position:absolute;left:0px;top:9px;" width="41" height="86" viewBox="0 0 41 86"><rect x="37" y="6" width="3" height="1" fill="#000"/><rect x="35" y="11" width="5" height="1" fill="#000"/><rect x="37" y="16" width="3" height="1" fill="#000"/><rect x="35" y="22" width="5" height="1" fill="#000"/><rect x="37" y="27" width="3" height="1" fill="#000"/><rect x="35" y="32" width="5" height="1" fill="#000"/><rect x="37" y="38" width="3" height="1" fill="#000"/><rect x="35" y="43" width="5" height="1" fill="#000"/><rect x="37" y="48" width="3" height="1" fill="#000"/><rect x="35" y="54" width="5" height="1" fill="#000"/><rect x="37" y="59" width="3" height="1" fill="#000"/><rect x="35" y="64" width="5" height="1" fill="#000"/><rect x="37" y="70" width="3" height="1" fill="#000"/><rect x="35" y="75" width="5" height="1" fill="#000"/><rect x="37" y="80" width="3" height="1" fill="#000"/></svg><div style="position:absolute;left:-169px;width:200px;text-align:right;top:24px;font-size:11px;line-height:13px;color:#000;white-space:nowrap;letter-spacing:-0.4px">50</div><div style="position:absolute;left:-169px;width:200px;text-align:right;top:45px;font-size:11px;line-height:13px;color:#000;white-space:nowrap;letter-spacing:-0.4px">0</div><div style="position:absolute;left:-169px;width:200px;text-align:right;top:66px;font-size:11px;line-height:13px;color:#000;white-space:nowrap;letter-spacing:-0.4px">-50</div><svg style="position:absolute;left:0px;top:97px;" width="41" height="86" viewBox="0 0 41 86"><rect x="37" y="6" width="3" height="1" fill="#000"/><rect x="35" y="11" width="5" height="1" fill="#000"/><rect x="37" y="16" width="3" height="1" fill="#000"/><rect x="35" y="22" width="5" height="1" fill="#000"/><rect x="37" y="27" width="3" height="1" fill="#000"/><rect x="35" y="32" width="5" height="1" fill="#000"/><rect x="37" y="38" width="3" height="1" fill="#000"/><rect x="35" y="43" width="5" height="1" fill="#000"/><rect x="37" y="48" width="3" height="1" fill="#000"/><rect x="35" y="54" width="5" height="1" fill="#000"/><rect x="37" y="59" width="3" height="1" fill="#000"/><rect x="35" y="64" width="5" height="1" fill="#000"/><rect x="37" y="70" width="3" height="1" fill="#000"/><rect x="35" y="75" width="5" height="1" fill="#000"/><rect x="37" y="80" width="3" height="1" fill="#000"/></svg><div style="position:absolute;left:-169px;width:200px;text-align:right;top:112px;font-size:11px;line-height:13px;color:#000;white-space:nowrap;letter-spacing:-0.4px">50</div><div style="position:absolute;left:-169px;width:200px;text-align:right;top:133px;font-size:11px;line-height:13px;color:#000;white-space:nowrap;letter-spacing:-0.4px">0</div><div style="position:absolute;left:-169px;width:200px;text-align:right;top:154px;font-size:11px;line-height:13px;color:#000;white-space:nowrap;letter-spacing:-0.4px">-50</div><svg style="position:absolute;left:41px;top:9px;overflow:hidden" width="802" height="174" viewBox="0 0 802 174"><rect x="0" y="0" width="802" height="86" fill="#000"/><path d="M0 43.5H802" stroke="#808080" stroke-width="1"/><path d="M0.5 43V44M1.5 43V44M2.5 43V44M3.5 43V44M4.5 43V44M5.5 43V44M6.5 43V44M7.5 43V44M8.5 43V44M9.5 43V44M10.5 43V44M11.5 43V44M12.5 43V44M13.5 43V44M14.5 43V44M15.5 43V44M16.5 43V44M17.5 43V44M18.5 43V44M19.5 42V44M20.5 41V44M21.5 40V45M22.5 39V46M23.5 40V46M24.5 13V73M25.5 1V84M26.5 3V79M27.5 18V73M28.5 38V48M29.5 37V47M30.5 39V49M31.5 25V61M32.5 29V55M33.5 39V47M34.5 39V47M35.5 38V47M36.5 21V66M37.5 23V61M38.5 29V53M39.5 41V46M40.5 41V44M41.5 41V44M42.5 42V44M43.5 43V44M44.5 43V44M45.5 43V44M46.5 43V44M47.5 43V44M48.5 43V44M49.5 43V44M50.5 43V44M51.5 42V44M52.5 42V44M53.5 42V44M54.5 42V44M55.5 43V44M56.5 43V44M57.5 43V44M58.5 43V44M59.5 43V44M60.5 43V44M61.5 43V44M62.5 43V44M63.5 43V44M64.5 43V44M65.5 43V44M66.5 43V44M67.5 42V45M68.5 40V46M69.5 40V46M70.5 39V50M71.5 38V48M72.5 38V48M73.5 38V49M74.5 40V47M75.5 41V45M76.5 43V44M77.5 43V44M78.5 43V44M79.5 43V44M80.5 43V44M81.5 42V44M82.5 41V44M83.5 40V45M84.5 40V46M85.5 40V46M86.5 42V44M87.5 43V44M88.5 43V44M89.5 43V44M90.5 41V45M91.5 40V46M92.5 40V47M93.5 39V48M94.5 40V48M95.5 40V47M96.5 40V47M97.5 38V47M98.5 40V46M99.5 38V46M100.5 41V46M101.5 40V46M102.5 42V44M103.5 42V44M104.5 42V45M105.5 41V45M106.5 41V46M107.5 41V46M108.5 42V43M109.5 42V43M110.5 39V46M111.5 41V46M112.5 41V46M113.5 40V45M114.5 42V44M115.5 42V43M116.5 41V44M117.5 42V44M118.5 43V44M119.5 43V44M120.5 43V44M121.5 43V44M122.5 43V44M123.5 43V44M124.5 43V44M125.5 43V44M126.5 43V44M127.5 43V44M128.5 43V44M129.5 43V44M130.5 43V44M131.5 43V44M132.5 43V44M133.5 43V44M134.5 43V44M135.5 43V44M136.5 43V44M137.5 43V44M138.5 43V44M139.5 43V44M140.5 43V44M141.5 43V44M142.5 43V44M143.5 43V44M144.5 43V44M145.5 43V44M146.5 43V44M147.5 43V44M148.5 43V44M149.5 43V44M150.5 43V44M151.5 43V44M152.5 43V44M153.5 43V44M154.5 43V44M155.5 43V44M156.5 43V44M157.5 43V44M158.5 43V44M159.5 43V44M160.5 43V44M161.5 43V44M162.5 43V44M163.5 43V44M164.5 43V44M165.5 43V44M166.5 43V44M167.5 43V44M168.5 43V44M169.5 43V44M170.5 43V44M171.5 41V45M172.5 41V47M173.5 38V47M174.5 38V49M175.5 31V58M176.5 35V47M177.5 35V48M178.5 37V51M179.5 25V57M180.5 38V49M181.5 38V55M182.5 37V52M183.5 29V61M184.5 34V51M185.5 35V50M186.5 33V52M187.5 36V51M188.5 33V51M189.5 34V52M190.5 32V55M191.5 34V51M192.5 35V52M193.5 36V50M194.5 34V49M195.5 36V48M196.5 39V50M197.5 37V49M198.5 38V47M199.5 40V45M200.5 40V46M201.5 34V53M202.5 39V45M203.5 38V45M204.5 39V48M205.5 40V46M206.5 38V47M207.5 39V47M208.5 40V48M209.5 35V53M210.5 37V49M211.5 38V48M212.5 36V47M213.5 37V50M214.5 38V49M215.5 39V47M216.5 39V47M217.5 36V47M218.5 39V49M219.5 39V47M220.5 39V47M221.5 39V47M222.5 40V49M223.5 39V47M224.5 39V47M225.5 39V47M226.5 40V47M227.5 41V45M228.5 41V46M229.5 42V44M230.5 42V44M231.5 43V44M232.5 43V44M233.5 43V44M234.5 43V44M235.5 43V44M236.5 43V44M237.5 43V44M238.5 43V44M239.5 43V44M240.5 43V44M241.5 43V44M242.5 43V44M243.5 43V44M244.5 43V44M245.5 43V44M246.5 43V44M247.5 43V44M248.5 43V44M249.5 43V44M250.5 43V44M251.5 43V44M252.5 43V44M253.5 43V44M254.5 43V44M255.5 43V44M256.5 43V44M257.5 43V44M258.5 43V44M259.5 43V44M260.5 43V44M261.5 43V44M262.5 43V44M263.5 43V44M264.5 43V44M265.5 43V44M266.5 43V44M267.5 43V44M268.5 43V44M269.5 43V44M270.5 43V44M271.5 43V44M272.5 43V44M273.5 43V44M274.5 43V44M275.5 43V44M276.5 43V44M277.5 43V44M278.5 43V44M279.5 43V44M280.5 43V44M281.5 43V44M282.5 43V44M283.5 43V44M284.5 43V44M285.5 43V44M286.5 43V44M287.5 43V44M288.5 43V44M289.5 43V44M290.5 43V44M291.5 43V44M292.5 43V44M293.5 43V44M294.5 43V44M295.5 43V44M296.5 43V44M297.5 43V44M298.5 43V44M299.5 43V44M300.5 43V44M301.5 43V44M302.5 43V44M303.5 43V44M304.5 43V44M305.5 43V44M306.5 43V44M307.5 43V44M308.5 43V44M309.5 43V44M310.5 43V44M311.5 43V44M312.5 43V44M313.5 43V44M314.5 43V44M315.5 43V44M316.5 43V44M317.5 43V44M318.5 43V44M319.5 43V44M320.5 43V44M321.5 43V44M322.5 43V44M323.5 43V44M324.5 43V44M325.5 43V44M326.5 43V44M327.5 43V44M328.5 43V44M329.5 43V44M330.5 43V44M331.5 43V44M332.5 43V44M333.5 43V44M334.5 43V44M335.5 42V43M336.5 42V44M337.5 42V44M338.5 42V44M339.5 41V44M340.5 41V45M341.5 40V46M342.5 40V44M343.5 40V45M344.5 36V46M345.5 43V44M346.5 40V46M347.5 39V45M348.5 38V46M349.5 41V46M350.5 39V46M351.5 25V57M352.5 40V47M353.5 40V47M354.5 40V46M355.5 39V46M356.5 40V45M357.5 39V46M358.5 39V45M359.5 40V51M360.5 40V45M361.5 40V45M362.5 40V46M363.5 39V45M364.5 41V45M365.5 37V50M366.5 41V45M367.5 40V45M368.5 41V44M369.5 41V44M370.5 41V44M371.5 42V44M372.5 42V43M373.5 43V44M374.5 43V44M375.5 43V44M376.5 43V44M377.5 43V44M378.5 43V44M379.5 43V44M380.5 43V44M381.5 43V44M382.5 43V44M383.5 43V44M384.5 43V44M385.5 43V44M386.5 43V44M387.5 43V44M388.5 41V44M389.5 42V44M390.5 43V44M391.5 43V44M392.5 43V44M393.5 43V44M394.5 43V44M395.5 42V44M396.5 42V44M397.5 43V44M398.5 43V44M399.5 43V44M400.5 43V44M401.5 43V44M402.5 43V44M403.5 43V44M404.5 43V44M405.5 43V44M406.5 43V44M407.5 43V44M408.5 43V44M409.5 43V44M410.5 43V44M411.5 43V44M412.5 43V44M413.5 43V44M414.5 43V44M415.5 43V44M416.5 43V44M417.5 43V44M418.5 43V44M419.5 42V44M420.5 42V45M421.5 41V46M422.5 42V43M423.5 40V45M424.5 40V45M425.5 34V49M426.5 39V46M427.5 39V48M428.5 39V46M429.5 39V47M430.5 40V46M431.5 41V45M432.5 42V45M433.5 42V44M434.5 42V44M435.5 42V44M436.5 40V45M437.5 40V46M438.5 41V45M439.5 38V51M440.5 40V46M441.5 40V45M442.5 40V47M443.5 41V46M444.5 39V45M445.5 40V45M446.5 43V44M447.5 41V46M448.5 41V45M449.5 41V46M450.5 41V44M451.5 42V44M452.5 43V44M453.5 43V44M454.5 43V44M455.5 43V44M456.5 43V44M457.5 43V44M458.5 43V44M459.5 43V44M460.5 43V44M461.5 43V44M462.5 43V44M463.5 43V44M464.5 43V44M465.5 43V44M466.5 43V44M467.5 43V44M468.5 43V44M469.5 43V44M470.5 43V44M471.5 43V44M472.5 43V44M473.5 43V44M474.5 43V44M475.5 43V44M476.5 43V44M477.5 43V44M478.5 43V44M479.5 43V44M480.5 42V44M481.5 40V45M482.5 41V45M483.5 41V45M484.5 39V45M485.5 42V44M486.5 42V43M487.5 41V46M488.5 42V44M489.5 43V44M490.5 43V44M491.5 43V44M492.5 43V44M493.5 43V44M494.5 43V44M495.5 43V44M496.5 42V44M497.5 41V44M498.5 41V46M499.5 40V46M500.5 41V47M501.5 41V46M502.5 40V47M503.5 40V46M504.5 41V46M505.5 40V45M506.5 40V46M507.5 41V45M508.5 42V44M509.5 43V44M510.5 43V44M511.5 43V44M512.5 43V44M513.5 42V44M514.5 43V44M515.5 41V46M516.5 41V45M517.5 39V45M518.5 38V46M519.5 40V47M520.5 39V46M521.5 41V45M522.5 41V44M523.5 43V44M524.5 43V44M525.5 43V44M526.5 43V44M527.5 43V44M528.5 43V44M529.5 42V44M530.5 41V45M531.5 40V45M532.5 40V45M533.5 39V47M534.5 39V47M535.5 40V46M536.5 40V47M537.5 39V48M538.5 40V47M539.5 42V44M540.5 40V46M541.5 40V45M542.5 39V47M543.5 39V48M544.5 40V46M545.5 39V48M546.5 39V46M547.5 39V47M548.5 41V46M549.5 42V45M550.5 42V44M551.5 43V44M552.5 43V44M553.5 43V44M554.5 43V44M555.5 43V44M556.5 43V44M557.5 43V44M558.5 43V44M559.5 43V44M560.5 43V44M561.5 43V44M562.5 43V44M563.5 43V44M564.5 43V44M565.5 43V44M566.5 43V44M567.5 43V44M568.5 43V44M569.5 43V44M570.5 43V44M571.5 43V44M572.5 42V44M573.5 28V53M574.5 41V44M575.5 41V45M576.5 41V46M577.5 39V46M578.5 40V47M579.5 32V55M580.5 39V46M581.5 37V48M582.5 38V47M583.5 40V49M584.5 31V59M585.5 36V50M586.5 38V49M587.5 36V59M588.5 42V44M589.5 37V50M590.5 33V49M591.5 30V57M592.5 19V69M593.5 0V86M594.5 0V86M595.5 13V83M596.5 38V49M597.5 36V49M598.5 27V60M599.5 37V47M600.5 36V50M601.5 39V47M602.5 39V49M603.5 40V46M604.5 39V48M605.5 39V47M606.5 40V47M607.5 41V46M608.5 41V44M609.5 41V44M610.5 43V44M611.5 43V44M612.5 43V44M613.5 43V44M614.5 43V44M615.5 43V44M616.5 43V44M617.5 43V44M618.5 43V44M619.5 43V44M620.5 43V44M621.5 43V44M622.5 43V44M623.5 43V44M624.5 43V44M625.5 43V44M626.5 43V44M627.5 43V44M628.5 43V44M629.5 43V44M630.5 43V44M631.5 43V44M632.5 43V44M633.5 43V44M634.5 43V44M635.5 43V44M636.5 43V44M637.5 43V44M638.5 43V44M639.5 43V44M640.5 43V44M641.5 43V44M642.5 43V44M643.5 43V44M644.5 43V44M645.5 43V44M646.5 43V44M647.5 43V44M648.5 43V44M649.5 43V44M650.5 43V44M651.5 43V44M652.5 43V44M653.5 43V44M654.5 43V44M655.5 43V44M656.5 42V44M657.5 42V44M658.5 41V45M659.5 41V45M660.5 41V46M661.5 42V43M662.5 42V43M663.5 41V45M664.5 42V44M665.5 41V47M666.5 38V47M667.5 38V46M668.5 36V54M669.5 39V47M670.5 39V47M671.5 37V49M672.5 38V47M673.5 43V44M674.5 35V48M675.5 39V49M676.5 39V47M677.5 37V47M678.5 38V46M679.5 38V48M680.5 34V55M681.5 42V43M682.5 38V47M683.5 39V46M684.5 39V46M685.5 26V56M686.5 41V46M687.5 40V45M688.5 41V45M689.5 40V46M690.5 40V46M691.5 40V45M692.5 42V45M693.5 42V45M694.5 43V44M695.5 43V44M696.5 43V44M697.5 43V44M698.5 43V44M699.5 43V44M700.5 43V44M701.5 43V44M702.5 43V44M703.5 43V44M704.5 43V44M705.5 42V44M706.5 42V46M707.5 41V45M708.5 42V44M709.5 43V44M710.5 43V44M711.5 43V44M712.5 43V44M713.5 43V44M714.5 43V44M715.5 43V44M716.5 43V44M717.5 43V44M718.5 43V44M719.5 43V44M720.5 43V44M721.5 43V44M722.5 43V44M723.5 43V44M724.5 43V44M725.5 43V44M726.5 43V44M727.5 43V44M728.5 43V44M729.5 43V44M730.5 43V44M731.5 43V44M732.5 43V44M733.5 43V44M734.5 43V44M735.5 43V44M736.5 43V44M737.5 43V44M738.5 43V44M739.5 43V44M740.5 43V44M741.5 43V44M742.5 43V44M743.5 43V44M744.5 43V44M745.5 43V44M746.5 43V44M747.5 43V44M748.5 43V44M749.5 43V44M750.5 43V44M751.5 43V44M752.5 43V44M753.5 43V44M754.5 43V44M755.5 43V44M756.5 43V44M757.5 43V44M758.5 43V44M759.5 43V44M760.5 43V44M761.5 43V44M762.5 43V44M763.5 43V44M764.5 43V44M765.5 43V44M766.5 43V44M767.5 43V44M768.5 43V44M769.5 43V44M770.5 43V44M771.5 43V44M772.5 43V44M773.5 43V44M774.5 43V44M775.5 43V44M776.5 43V44M777.5 43V44M778.5 43V44M779.5 43V44M780.5 43V44M781.5 43V44M782.5 43V44M783.5 43V44M784.5 43V44M785.5 43V44M786.5 43V44M787.5 43V44M788.5 43V44M789.5 43V44M790.5 43V44M791.5 43V44M792.5 43V44M793.5 43V44M794.5 43V44M795.5 43V44M796.5 43V44M797.5 43V44M798.5 43V44M799.5 43V44M800.5 43V44M801.5 43V44" stroke="#00ff00" stroke-width="1" shape-rendering="crispEdges"/><path d="M0 21.5H802" stroke="#a4a4a4" stroke-width="1" stroke-dasharray="3 3" shape-rendering="crispEdges"/><path d="M0 64.5H802" stroke="#a4a4a4" stroke-width="1" stroke-dasharray="3 3" shape-rendering="crispEdges"/><rect x="0" y="86" width="802" height="1" fill="#a0a0a0"/><rect x="0" y="87" width="802" height="1" fill="#fff"/><rect x="0" y="88" width="802" height="86" fill="#000"/><path d="M0 131.5H802" stroke="#808080" stroke-width="1"/><path d="M0.5 131V132M1.5 131V132M2.5 131V132M3.5 131V132M4.5 131V132M5.5 131V132M6.5 131V132M7.5 131V132M8.5 131V132M9.5 131V132M10.5 131V132M11.5 131V132M12.5 131V132M13.5 131V132M14.5 131V132M15.5 131V132M16.5 131V132M17.5 131V132M18.5 131V132M19.5 130V132M20.5 130V133M21.5 130V132M22.5 128V133M23.5 129V133M24.5 101V161M25.5 89V172M26.5 91V167M27.5 106V161M28.5 127V134M29.5 128V137M30.5 126V135M31.5 113V149M32.5 117V143M33.5 127V134M34.5 126V134M35.5 127V134M36.5 109V154M37.5 111V149M38.5 117V141M39.5 128V133M40.5 128V133M41.5 130V133M42.5 130V132M43.5 131V132M44.5 131V132M45.5 131V132M46.5 131V132M47.5 131V132M48.5 131V132M49.5 131V132M50.5 131V132M51.5 130V131M52.5 130V132M53.5 130V132M54.5 130V132M55.5 131V132M56.5 131V132M57.5 131V132M58.5 131V132M59.5 131V132M60.5 131V132M61.5 131V132M62.5 131V132M63.5 131V132M64.5 131V132M65.5 131V132M66.5 131V132M67.5 129V133M68.5 128V134M69.5 128V135M70.5 130V131M71.5 127V137M72.5 119V137M73.5 101V139M74.5 129V134M75.5 130V132M76.5 131V132M77.5 131V132M78.5 131V132M79.5 131V132M80.5 131V132M81.5 130V133M82.5 129V134M83.5 127V134M84.5 128V133M85.5 129V134M86.5 130V132M87.5 131V132M88.5 131V132M89.5 130V132M90.5 97V140M91.5 127V134M92.5 130V132M93.5 126V136M94.5 128V134M95.5 125V137M96.5 126V136M97.5 126V135M98.5 127V134M99.5 130V131M100.5 130V132M101.5 128V133M102.5 131V132M103.5 130V132M104.5 129V132M105.5 128V132M106.5 131V132M107.5 128V134M108.5 131V132M109.5 127V134M110.5 128V133M111.5 128V134M112.5 130V131M113.5 128V134M114.5 128V134M115.5 129V133M116.5 130V132M117.5 130V132M118.5 131V132M119.5 131V132M120.5 131V132M121.5 131V132M122.5 131V132M123.5 131V132M124.5 131V132M125.5 131V132M126.5 131V132M127.5 131V132M128.5 131V132M129.5 131V132M130.5 131V132M131.5 131V132M132.5 131V132M133.5 131V132M134.5 131V132M135.5 131V132M136.5 131V132M137.5 131V132M138.5 131V132M139.5 131V132M140.5 131V132M141.5 131V132M142.5 131V132M143.5 131V132M144.5 131V132M145.5 131V132M146.5 131V132M147.5 131V132M148.5 131V132M149.5 131V132M150.5 131V132M151.5 131V132M152.5 131V132M153.5 131V132M154.5 131V132M155.5 131V132M156.5 131V132M157.5 131V132M158.5 131V132M159.5 131V132M160.5 131V132M161.5 131V132M162.5 131V132M163.5 131V132M164.5 131V132M165.5 131V132M166.5 131V132M167.5 131V132M168.5 131V132M169.5 131V132M170.5 131V132M171.5 129V133M172.5 128V135M173.5 128V136M174.5 127V137M175.5 119V146M176.5 126V136M177.5 125V138M178.5 123V136M179.5 113V145M180.5 123V137M181.5 121V139M182.5 120V141M183.5 117V149M184.5 123V143M185.5 120V142M186.5 123V138M187.5 123V142M188.5 125V138M189.5 125V143M190.5 120V143M191.5 126V139M192.5 125V140M193.5 125V136M194.5 122V140M195.5 124V140M196.5 125V137M197.5 125V137M198.5 130V132M199.5 128V134M200.5 129V133M201.5 122V141M202.5 128V134M203.5 127V134M204.5 130V131M205.5 125V137M206.5 130V132M207.5 127V135M208.5 129V133M209.5 123V141M210.5 131V133M211.5 126V138M212.5 126V135M213.5 128V135M214.5 128V138M215.5 124V137M216.5 125V138M217.5 125V136M218.5 125V136M219.5 128V137M220.5 128V134M221.5 127V135M222.5 126V135M223.5 127V133M224.5 129V136M225.5 129V135M226.5 129V134M227.5 128V133M228.5 128V133M229.5 130V131M230.5 130V132M231.5 131V132M232.5 131V132M233.5 131V132M234.5 131V132M235.5 131V132M236.5 131V132M237.5 131V132M238.5 131V132M239.5 131V132M240.5 131V132M241.5 131V132M242.5 131V132M243.5 131V132M244.5 131V132M245.5 131V132M246.5 131V132M247.5 131V132M248.5 131V132M249.5 131V132M250.5 131V132M251.5 131V132M252.5 131V132M253.5 131V132M254.5 131V132M255.5 131V132M256.5 131V132M257.5 131V132M258.5 131V132M259.5 131V132M260.5 131V132M261.5 131V132M262.5 131V132M263.5 131V132M264.5 131V132M265.5 131V132M266.5 131V132M267.5 131V132M268.5 131V132M269.5 131V132M270.5 131V132M271.5 131V132M272.5 131V132M273.5 131V132M274.5 131V132M275.5 131V132M276.5 131V132M277.5 131V132M278.5 131V132M279.5 131V132M280.5 131V132M281.5 131V132M282.5 131V132M283.5 131V132M284.5 131V132M285.5 131V132M286.5 131V132M287.5 131V132M288.5 131V132M289.5 131V132M290.5 131V132M291.5 131V132M292.5 131V132M293.5 131V132M294.5 131V132M295.5 131V132M296.5 131V132M297.5 131V132M298.5 131V132M299.5 131V132M300.5 131V132M301.5 131V132M302.5 131V132M303.5 131V132M304.5 131V132M305.5 131V132M306.5 131V132M307.5 131V132M308.5 131V132M309.5 131V132M310.5 131V132M311.5 131V132M312.5 131V132M313.5 131V132M314.5 131V132M315.5 131V132M316.5 131V132M317.5 131V132M318.5 131V132M319.5 131V132M320.5 131V132M321.5 131V132M322.5 131V132M323.5 131V132M324.5 131V132M325.5 131V132M326.5 131V132M327.5 131V132M328.5 131V132M329.5 131V132M330.5 131V132M331.5 131V132M332.5 131V132M333.5 131V132M334.5 131V132M335.5 130V132M336.5 130V132M337.5 130V132M338.5 129V133M339.5 128V133M340.5 128V133M341.5 128V133M342.5 128V133M343.5 131V132M344.5 124V134M345.5 129V133M346.5 127V134M347.5 129V135M348.5 128V133M349.5 127V134M350.5 127V133M351.5 113V145M352.5 127V135M353.5 128V134M354.5 128V135M355.5 126V133M356.5 127V134M357.5 128V133M358.5 126V133M359.5 128V139M360.5 128V134M361.5 128V133M362.5 128V134M363.5 127V133M364.5 131V132M365.5 125V138M366.5 129V132M367.5 129V133M368.5 129V133M369.5 129V132M370.5 129V132M371.5 130V132M372.5 131V132M373.5 131V132M374.5 131V132M375.5 131V132M376.5 131V132M377.5 131V132M378.5 131V132M379.5 131V132M380.5 131V132M381.5 131V132M382.5 131V132M383.5 131V132M384.5 131V132M385.5 131V132M386.5 131V132M387.5 131V132M388.5 130V132M389.5 130V133M390.5 131V132M391.5 131V132M392.5 131V132M393.5 131V132M394.5 131V132M395.5 130V133M396.5 130V133M397.5 131V132M398.5 131V132M399.5 131V132M400.5 131V132M401.5 131V132M402.5 131V132M403.5 131V132M404.5 131V132M405.5 131V132M406.5 131V132M407.5 131V132M408.5 131V132M409.5 131V132M410.5 131V132M411.5 131V132M412.5 131V132M413.5 131V132M414.5 131V132M415.5 131V132M416.5 131V132M417.5 131V132M418.5 131V132M419.5 131V132M420.5 129V133M421.5 128V133M422.5 129V134M423.5 128V134M424.5 127V135M425.5 122V137M426.5 127V134M427.5 128V134M428.5 126V134M429.5 127V133M430.5 129V135M431.5 128V133M432.5 129V133M433.5 130V132M434.5 130V132M435.5 130V133M436.5 129V133M437.5 128V134M438.5 127V134M439.5 126V139M440.5 127V133M441.5 127V134M442.5 128V134M443.5 128V135M444.5 128V135M445.5 126V136M446.5 128V134M447.5 128V135M448.5 128V133M449.5 129V134M450.5 129V133M451.5 130V132M452.5 131V132M453.5 131V132M454.5 131V132M455.5 131V132M456.5 131V132M457.5 131V132M458.5 131V132M459.5 131V132M460.5 131V132M461.5 131V132M462.5 131V132M463.5 131V132M464.5 131V132M465.5 131V132M466.5 131V132M467.5 131V132M468.5 131V132M469.5 131V132M470.5 131V132M471.5 131V132M472.5 131V132M473.5 131V132M474.5 131V132M475.5 131V132M476.5 131V132M477.5 131V132M478.5 131V132M479.5 131V132M480.5 130V132M481.5 129V133M482.5 129V134M483.5 128V133M484.5 127V135M485.5 128V133M486.5 128V134M487.5 129V132M488.5 130V132M489.5 131V132M490.5 131V132M491.5 131V132M492.5 131V132M493.5 131V132M494.5 131V132M495.5 131V132M496.5 130V132M497.5 129V134M498.5 131V132M499.5 129V134M500.5 128V135M501.5 128V135M502.5 129V134M503.5 129V135M504.5 129V134M505.5 129V134M506.5 128V133M507.5 129V133M508.5 130V132M509.5 131V132M510.5 131V132M511.5 131V132M512.5 131V132M513.5 130V132M514.5 129V133M515.5 128V134M516.5 128V135M517.5 127V136M518.5 128V134M519.5 128V134M520.5 128V134M521.5 128V133M522.5 128V133M523.5 130V132M524.5 131V132M525.5 131V132M526.5 131V132M527.5 131V132M528.5 131V132M529.5 131V132M530.5 130V133M531.5 129V133M532.5 131V132M533.5 127V134M534.5 127V134M535.5 129V136M536.5 126V135M537.5 130V132M538.5 128V135M539.5 126V135M540.5 128V133M541.5 128V135M542.5 127V134M543.5 127V136M544.5 126V134M545.5 127V135M546.5 128V134M547.5 128V135M548.5 128V135M549.5 129V134M550.5 131V132M551.5 131V132M552.5 131V132M553.5 131V132M554.5 131V132M555.5 131V132M556.5 131V132M557.5 131V132M558.5 131V132M559.5 131V132M560.5 131V132M561.5 131V132M562.5 131V132M563.5 131V132M564.5 131V132M565.5 131V132M566.5 131V132M567.5 131V132M568.5 131V132M569.5 131V132M570.5 131V132M571.5 131V132M572.5 130V132M573.5 116V141M574.5 129V133M575.5 129V133M576.5 130V131M577.5 127V135M578.5 126V136M579.5 120V143M580.5 127V136M581.5 127V137M582.5 126V135M583.5 127V137M584.5 119V147M585.5 125V137M586.5 124V136M587.5 124V147M588.5 124V136M589.5 124V137M590.5 122V137M591.5 127V138M592.5 107V157M593.5 88V174M594.5 88V174M595.5 101V171M596.5 122V145M597.5 121V141M598.5 115V148M599.5 126V136M600.5 127V137M601.5 128V137M602.5 129V132M603.5 127V136M604.5 128V136M605.5 129V134M606.5 128V133M607.5 129V134M608.5 129V134M609.5 130V133M610.5 130V132M611.5 131V132M612.5 131V132M613.5 131V132M614.5 131V132M615.5 131V132M616.5 131V132M617.5 131V132M618.5 131V132M619.5 131V132M620.5 131V132M621.5 131V132M622.5 131V132M623.5 131V132M624.5 131V132M625.5 131V132M626.5 131V132M627.5 131V132M628.5 131V132M629.5 131V132M630.5 131V132M631.5 131V132M632.5 131V132M633.5 131V132M634.5 131V132M635.5 131V132M636.5 131V132M637.5 131V132M638.5 131V132M639.5 131V132M640.5 131V132M641.5 131V132M642.5 131V132M643.5 131V132M644.5 131V132M645.5 131V132M646.5 131V132M647.5 131V132M648.5 131V132M649.5 131V132M650.5 131V132M651.5 131V132M652.5 131V132M653.5 131V132M654.5 131V132M655.5 131V132M656.5 130V132M657.5 131V132M658.5 131V132M659.5 129V133M660.5 129V133M661.5 129V133M662.5 128V133M663.5 128V134M664.5 128V135M665.5 127V133M666.5 128V136M667.5 127V134M668.5 124V142M669.5 126V135M670.5 127V135M671.5 127V134M672.5 125V136M673.5 125V135M674.5 123V136M675.5 128V136M676.5 126V134M677.5 126V134M678.5 127V136M679.5 131V132M680.5 122V143M681.5 128V135M682.5 126V135M683.5 130V132M684.5 128V135M685.5 114V144M686.5 128V134M687.5 129V134M688.5 129V133M689.5 129V134M690.5 128V133M691.5 129V133M692.5 129V132M693.5 130V132M694.5 130V132M695.5 131V132M696.5 131V132M697.5 131V132M698.5 131V132M699.5 131V132M700.5 131V132M701.5 131V132M702.5 131V132M703.5 131V132M704.5 131V132M705.5 130V132M706.5 129V133M707.5 129V134M708.5 130V132M709.5 131V132M710.5 131V132M711.5 131V132M712.5 131V132M713.5 131V132M714.5 131V132M715.5 131V132M716.5 131V132M717.5 131V132M718.5 131V132M719.5 131V132M720.5 131V132M721.5 131V132M722.5 131V132M723.5 131V132M724.5 131V132M725.5 131V132M726.5 131V132M727.5 131V132M728.5 131V132M729.5 131V132M730.5 131V132M731.5 131V132M732.5 131V132M733.5 131V132M734.5 131V132M735.5 131V132M736.5 131V132M737.5 131V132M738.5 131V132M739.5 131V132M740.5 131V132M741.5 131V132M742.5 131V132M743.5 131V132M744.5 131V132M745.5 131V132M746.5 131V132M747.5 131V132M748.5 131V132M749.5 131V132M750.5 131V132M751.5 131V132M752.5 131V132M753.5 131V132M754.5 131V132M755.5 131V132M756.5 131V132M757.5 131V132M758.5 131V132M759.5 131V132M760.5 131V132M761.5 131V132M762.5 131V132M763.5 131V132M764.5 131V132M765.5 131V132M766.5 131V132M767.5 131V132M768.5 131V132M769.5 131V132M770.5 131V132M771.5 131V132M772.5 131V132M773.5 131V132M774.5 131V132M775.5 131V132M776.5 131V132M777.5 131V132M778.5 131V132M779.5 131V132M780.5 131V132M781.5 131V132M782.5 131V132M783.5 131V132M784.5 131V132M785.5 131V132M786.5 131V132M787.5 131V132M788.5 131V132M789.5 131V132M790.5 131V132M791.5 131V132M792.5 131V132M793.5 131V132M794.5 131V132M795.5 131V132M796.5 131V132M797.5 131V132M798.5 131V132M799.5 131V132M800.5 131V132M801.5 131V132" stroke="#00ff00" stroke-width="1" shape-rendering="crispEdges"/><path d="M0 109.5H802" stroke="#a4a4a4" stroke-width="1" stroke-dasharray="3 3" shape-rendering="crispEdges"/><path d="M0 152.5H802" stroke="#a4a4a4" stroke-width="1" stroke-dasharray="3 3" shape-rendering="crispEdges"/><rect x="0" y="0" width="1" height="174" fill="#ffff00"/><path d="M-3.5 0 L4.5 0 L0.5 5 Z" fill="#ffff00"/><path d="M-3.5 174 L4.5 174 L0.5 169 Z" fill="#ffff00"/></svg><div style="position:absolute;left:0px;top:95px;width:41px;height:1px;background:#a0a0a0"></div><div style="position:absolute;left:0px;top:96px;width:41px;height:1px;background:#fff"></div><div style="position:absolute;left:0px;top:183px;width:41px;height:1px;background:#a0a0a0"></div><div style="position:absolute;left:0px;top:184px;width:41px;height:1px;background:#fff"></div><svg style="position:absolute;left:41px;top:184px;" width="802" height="20" viewBox="0 0 802 20"><rect x="412" y="0" width="1" height="5" fill="#000"/><rect x="426" y="0" width="1" height="2" fill="#000"/><rect x="440" y="0" width="1" height="2" fill="#000"/><rect x="454" y="0" width="1" height="2" fill="#000"/><rect x="468" y="0" width="1" height="2" fill="#000"/><rect x="482" y="0" width="1" height="2" fill="#000"/><rect x="495" y="0" width="1" height="2" fill="#000"/><rect x="509" y="0" width="1" height="2" fill="#000"/><rect x="523" y="0" width="1" height="2" fill="#000"/><rect x="537" y="0" width="1" height="2" fill="#000"/><rect x="551" y="0" width="1" height="5" fill="#000"/><rect x="565" y="0" width="1" height="2" fill="#000"/><rect x="579" y="0" width="1" height="2" fill="#000"/><rect x="593" y="0" width="1" height="2" fill="#000"/><rect x="607" y="0" width="1" height="2" fill="#000"/><rect x="620" y="0" width="1" height="2" fill="#000"/><rect x="634" y="0" width="1" height="2" fill="#000"/><rect x="648" y="0" width="1" height="2" fill="#000"/><rect x="662" y="0" width="1" height="2" fill="#000"/><rect x="676" y="0" width="1" height="2" fill="#000"/><rect x="690" y="0" width="1" height="5" fill="#000"/><rect x="704" y="0" width="1" height="2" fill="#000"/><rect x="718" y="0" width="1" height="2" fill="#000"/><rect x="732" y="0" width="1" height="2" fill="#000"/><rect x="746" y="0" width="1" height="2" fill="#000"/><rect x="760" y="0" width="1" height="2" fill="#000"/><rect x="773" y="0" width="1" height="2" fill="#000"/><rect x="787" y="0" width="1" height="2" fill="#000"/><rect x="801" y="0" width="1" height="2" fill="#000"/></svg><div style="position:absolute;left:41px;top:184px;width:802px;height:20px;overflow:hidden"><div style="position:absolute;left:551px;top:6px;font-size:11px;line-height:13px;color:#000;white-space:nowrap;letter-spacing:-0.1px">00:00:15</div><div style="position:absolute;left:690px;top:6px;font-size:11px;line-height:13px;color:#000;white-space:nowrap;letter-spacing:-0.1px">00:00:20</div></div><div style="position:absolute;left:0px;top:204px;width:843px;height:1px;background:#a0a0a0"></div><div style="position:absolute;left:0px;top:205px;width:843px;height:1px;background:#fff"></div><div class="btn" style="left:1px;top:209px;width:23px;height:23px"></div><svg style="position:absolute;left:1px;top:209px;" width="22" height="22" viewBox="0 0 22 22"><path d="M13.280000000000001 12.879999999999999 L17.5 17.2" stroke="#3c3c3c" stroke-width="2.8" stroke-linecap="round"/><circle cx="10.4" cy="10" r="4.8" fill="url(#gLens)" stroke="#3c3c3c" stroke-width="1.5"/><path d="M7.4 10 H13.4 M10.4 7 V13" stroke="#000" stroke-width="1.5"/><path d="M18.5 5.5 V12.5 M16.9 7.3 L18.5 5.5 L20.1 7.3 M16.9 10.7 L18.5 12.5 L20.1 10.7" stroke="#000" stroke-width="1.3" fill="none"/></svg><div class="btn" style="left:25px;top:209px;width:23px;height:23px"></div><svg style="position:absolute;left:25px;top:209px;" width="22" height="22" viewBox="0 0 22 22"><path d="M13.280000000000001 12.879999999999999 L17.5 17.2" stroke="#3c3c3c" stroke-width="2.8" stroke-linecap="round"/><circle cx="10.4" cy="10" r="4.8" fill="url(#gLens)" stroke="#3c3c3c" stroke-width="1.5"/><path d="M7.4 10 H13.4" stroke="#000" stroke-width="1.5"/><path d="M18.5 5.5 V12.5 M16.9 7.3 L18.5 5.5 L20.1 7.3 M16.9 10.7 L18.5 12.5 L20.1 10.7" stroke="#000" stroke-width="1.3" fill="none"/></svg><div class="btn" style="left:794px;top:209px;width:23px;height:23px"></div><svg style="position:absolute;left:794px;top:209px;" width="22" height="22" viewBox="0 0 22 22"><path d="M13.280000000000001 12.879999999999999 L17.5 17.2" stroke="#3c3c3c" stroke-width="2.8" stroke-linecap="round"/><circle cx="10.4" cy="10" r="4.8" fill="url(#gLens)" stroke="#3c3c3c" stroke-width="1.5"/><path d="M7.4 10 H13.4 M10.4 7 V13" stroke="#000" stroke-width="1.5"/><path d="M6.5 18.3 H13.5 M8.3 16.7 L6.5 18.3 L8.3 19.9 M11.7 16.7 L13.5 18.3 L11.7 19.9" stroke="#000" stroke-width="1.1" fill="none"/></svg><div class="btn" style="left:818px;top:209px;width:23px;height:23px"></div><svg style="position:absolute;left:818px;top:209px;" width="22" height="22" viewBox="0 0 22 22"><path d="M13.280000000000001 12.879999999999999 L17.5 17.2" stroke="#3c3c3c" stroke-width="2.8" stroke-linecap="round"/><circle cx="10.4" cy="10" r="4.8" fill="url(#gLens)" stroke="#3c3c3c" stroke-width="1.5"/><path d="M7.4 10 H13.4" stroke="#000" stroke-width="1.5"/><path d="M6.5 18.3 H13.5 M8.3 16.7 L6.5 18.3 L8.3 19.9 M11.7 16.7 L13.5 18.3 L11.7 19.9" stroke="#000" stroke-width="1.1" fill="none"/></svg><div style="position:absolute;left:56px;top:211px;width:730px;height:18px;background:linear-gradient(90deg,#e6e6e6,#f0f0f0 3%,#f0f0f0 97%,#e6e6e6);border-top:1px solid #e8e8e8;box-sizing:border-box"></div><svg style="position:absolute;left:56px;top:211px;" width="730" height="18" viewBox="0 0 730 18"><path d="M7 9 L10 6 V12 Z" fill="#505050"/><path d="M723 9 L720 6 V12 Z" fill="#505050"/></svg><div style="position:absolute;left:400px;top:211px;width:368px;height:18px;box-sizing:border-box;border:1px solid #9a9a9a;border-radius:2px;background:linear-gradient(#f3f3f3,#e6e6e6 50%,#d6d6d6 51%,#cfcfcf)"></div><svg style="position:absolute;left:400px;top:211px;" width="368" height="18" viewBox="0 0 368 18"><rect x="181" y="6" width="1" height="6" fill="#606060"/><rect x="183" y="6" width="1" height="6" fill="#606060"/><rect x="185" y="6" width="1" height="6" fill="#606060"/></svg><div class="btn" style="left:1px;top:236px;width:31px;height:23px"></div><svg style="position:absolute;left:1px;top:236px;" width="30" height="22" viewBox="0 0 30 22"><path d="M12.5 8.0 Q12.5 7.0 13.5 7.0 H16.75 L21.0 12.25 L16.75 17.5 H13.5 Q12.5 17.5 12.5 16.5 Z" fill="url(#gPlay)" stroke="#3a3a3a" stroke-width="1" stroke-linejoin="round"/></svg><div class="btn" style="left:33px;top:236px;width:31px;height:23px"></div><svg style="position:absolute;left:33px;top:236px;" width="30" height="22" viewBox="0 0 30 22"><rect x="10" y="6.5" width="2.2" height="11.5" fill="#303030"/><path d="M13.5 8.0 Q13.5 7.0 14.5 7.0 H17.75 L22.0 12.25 L17.75 17.5 H14.5 Q13.5 17.5 13.5 16.5 Z" fill="url(#gPlay)" stroke="#3a3a3a" stroke-width="1" stroke-linejoin="round"/></svg><div class="btn" style="left:65px;top:236px;width:31px;height:23px"></div><svg style="position:absolute;left:65px;top:236px;" width="30" height="22" viewBox="0 0 30 22"><rect x="10.5" y="6.5" width="11" height="11" rx="2.2" fill="url(#gStop)" stroke="#3a3a3a"/><path d="M13 8.5 H19" stroke="#fff" stroke-width=".8" stroke-dasharray="1 1"/></svg><div class="btn" style="left:97px;top:236px;width:31px;height:23px"></div><svg style="position:absolute;left:97px;top:236px;" width="30" height="22" viewBox="0 0 30 22"><rect x="9.5" y="6.5" width="3" height="11" rx="1" fill="url(#gGray)" stroke="#3a3a3a"/><path d="M22.5 6.5 V17.5 L13.5 12 Z" fill="url(#gGray)" stroke="#3a3a3a" stroke-linejoin="round"/></svg><div class="btn" style="left:129px;top:236px;width:31px;height:23px"></div><svg style="position:absolute;left:129px;top:236px;" width="30" height="22" viewBox="0 0 30 22"><path d="M9.5 6.5 V17.5 L18.5 12 Z" fill="url(#gGray)" stroke="#3a3a3a" stroke-linejoin="round"/><rect x="19.5" y="6.5" width="3" height="11" rx="1" fill="url(#gGray)" stroke="#3a3a3a"/></svg><div class="box" style="left:549px;top:236px;width:70px;height:22px"></div><div class="box" style="left:622px;top:236px;width:70px;height:22px"></div><div class="box" style="left:696px;top:236px;width:70px;height:22px">00:00:00</div><div class="box" style="left:770px;top:236px;width:70px;height:22px">00:00:23</div></div></div><div style="position:absolute;left:52px;top:263px;width:669px;height:300px;overflow:hidden"><div style="position:absolute;left:0px;top:0px;width:669px;height:300px;box-sizing:border-box;border:1px solid #1e2328;border-radius:5px 5px 0 0;background:#b9d1ea"></div><div style="position:absolute;left:1px;top:1px;width:667px;height:29px;border-radius:4px 4px 0 0;background:linear-gradient(180deg,#93aecd 0px,#a3bcd9 14px,#b9d1ea 29px)"></div><div style="position:absolute;left:1px;top:1px;width:667px;height:298px;box-sizing:border-box;border:1px solid rgba(255,255,255,.55);border-radius:4px 4px 0 0;border-bottom-color:#46d2f2"></div><svg style="position:absolute;left:10px;top:10px;" width="16" height="16" viewBox="0 0 16 16"><path d="M3.5 0.5 H12 L15.5 4 V15.5 H3.5 Z" fill="#fbf8f0" stroke="#6a6060"/>
<rect x="0" y="1" width="9.5" height="4" fill="#0e7a3a"/><rect x="0" y="1" width="1" height="4" fill="#111"/><rect x="2" y="2" width="1.4" height="2" fill="#fff"/><rect x="6" y="2" width="1.4" height="2" fill="#fff"/>
<path d="M3.5 9 L4.5 8 L5.5 11 L6.5 6 L7.5 12 L8.5 6.5 L9.5 11 L10.5 7.5 L11.5 10 L12.5 8 L14.5 9" fill="none" stroke="#1020c0" stroke-width="0.9"/></svg><div style="position:absolute;left:30px;top:12px;font-size:12px;line-height:14px;color:#1a1a1a;white-space:nowrap;letter-spacing:-0.2px">Untitled 1</div><div style="position:absolute;left:562px;top:10px;width:31px;height:17px;box-sizing:border-box;border:1px solid #5f6f84;border-radius:3px;background:linear-gradient(#dbe6f3 0%,#c6d6ea 45%,#a9bfdb 50%,#b8cde5 100%);box-shadow:inset 0 0 0 1px rgba(255,255,255,.45)"></div><div style="position:absolute;left:595px;top:10px;width:31px;height:17px;box-sizing:border-box;border:1px solid #5f6f84;border-radius:3px;background:linear-gradient(#dbe6f3 0%,#c6d6ea 45%,#a9bfdb 50%,#b8cde5 100%);box-shadow:inset 0 0 0 1px rgba(255,255,255,.45)"></div><div style="position:absolute;left:628px;top:10px;width:31px;height:17px;box-sizing:border-box;border:1px solid #6b2a20;border-radius:3px;background:linear-gradient(#e8a192 0%,#d7826e 45%,#c0452b 52%,#d06548 100%);box-shadow:inset 0 0 0 1px rgba(255,255,255,.45)"></div><svg style="position:absolute;left:562px;top:10px;" width="97" height="17" viewBox="0 0 97 17"><rect x="10.5" y="8.5" width="10" height="3.6" rx="1.5" fill="#fff" stroke="#2e3440" stroke-width="1"/>
<rect x="43.5" y="4.5" width="10" height="8" rx="1" fill="#fff" stroke="#2e3440" stroke-width="1"/><rect x="46.5" y="7.5" width="4" height="2" fill="#b8c2d0" stroke="#2e3440" stroke-width="1"/>
<path d="M78.8 6.2 L84.2 10.8 M84.2 6.2 L78.8 10.8" stroke="#2e3440" stroke-width="4.2" stroke-linecap="square"/><path d="M78.8 6.2 L84.2 10.8 M84.2 6.2 L78.8 10.8" stroke="#fff" stroke-width="2" stroke-linecap="square"/></svg><div style="position:absolute;left:8px;top:30px;width:653px;height:262px;overflow:hidden"><div style="position:absolute;left:0px;top:0px;width:653px;height:262px;background:#f0f0f0"></div><div style="position:absolute;left:0px;top:7px;width:653px;height:1px;background:#a0a0a0"></div><div style="position:absolute;left:0px;top:8px;width:653px;height:1px;background:#fff"></div><svg style="position:absolute;left:0px;top:9px;" width="41" height="86" viewBox="0 0 41 86"><rect x="37" y="6" width="3" height="1" fill="#000"/><rect x="35" y="11" width="5" height="1" fill="#000"/><rect x="37" y="16" width="3" height="1" fill="#000"/><rect x="35" y="22" width="5" height="1" fill="#000"/><rect x="37" y="27" width="3" height="1" fill="#000"/><rect x="35" y="32" width="5" height="1" fill="#000"/><rect x="37" y="38" width="3" height="1" fill="#000"/><rect x="35" y="43" width="5" height="1" fill="#000"/><rect x="37" y="48" width="3" height="1" fill="#000"/><rect x="35" y="54" width="5" height="1" fill="#000"/><rect x="37" y="59" width="3" height="1" fill="#000"/><rect x="35" y="64" width="5" height="1" fill="#000"/><rect x="37" y="70" width="3" height="1" fill="#000"/><rect x="35" y="75" width="5" height="1" fill="#000"/><rect x="37" y="80" width="3" height="1" fill="#000"/></svg><div style="position:absolute;left:-169px;width:200px;text-align:right;top:24px;font-size:11px;line-height:13px;color:#000;white-space:nowrap;letter-spacing:-0.4px">50</div><div style="position:absolute;left:-169px;width:200px;text-align:right;top:45px;font-size:11px;line-height:13px;color:#000;white-space:nowrap;letter-spacing:-0.4px">0</div><div style="position:absolute;left:-169px;width:200px;text-align:right;top:66px;font-size:11px;line-height:13px;color:#000;white-space:nowrap;letter-spacing:-0.4px">-50</div><svg style="position:absolute;left:0px;top:97px;" width="41" height="86" viewBox="0 0 41 86"><rect x="37" y="6" width="3" height="1" fill="#000"/><rect x="35" y="11" width="5" height="1" fill="#000"/><rect x="37" y="16" width="3" height="1" fill="#000"/><rect x="35" y="22" width="5" height="1" fill="#000"/><rect x="37" y="27" width="3" height="1" fill="#000"/><rect x="35" y="32" width="5" height="1" fill="#000"/><rect x="37" y="38" width="3" height="1" fill="#000"/><rect x="35" y="43" width="5" height="1" fill="#000"/><rect x="37" y="48" width="3" height="1" fill="#000"/><rect x="35" y="54" width="5" height="1" fill="#000"/><rect x="37" y="59" width="3" height="1" fill="#000"/><rect x="35" y="64" width="5" height="1" fill="#000"/><rect x="37" y="70" width="3" height="1" fill="#000"/><rect x="35" y="75" width="5" height="1" fill="#000"/><rect x="37" y="80" width="3" height="1" fill="#000"/></svg><div style="position:absolute;left:-169px;width:200px;text-align:right;top:112px;font-size:11px;line-height:13px;color:#000;white-space:nowrap;letter-spacing:-0.4px">50</div><div style="position:absolute;left:-169px;width:200px;text-align:right;top:133px;font-size:11px;line-height:13px;color:#000;white-space:nowrap;letter-spacing:-0.4px">0</div><div style="position:absolute;left:-169px;width:200px;text-align:right;top:154px;font-size:11px;line-height:13px;color:#000;white-space:nowrap;letter-spacing:-0.4px">-50</div><svg style="position:absolute;left:41px;top:9px;overflow:hidden" width="612" height="174" viewBox="0 0 612 174"><rect x="0" y="0" width="612" height="86" fill="#000"/><rect x="141" y="0" width="359" height="86" fill="#0000ff"/><path d="M0 43.5H612" stroke="#808080" stroke-width="1"/><path d="M0.5 43V63M1.5 45V58M2.5 44V57M3.5 17V48M4.5 10V22M5.5 22V34M6.5 10V26M7.5 1V15M8.5 7V32M9.5 15V35M10.5 14V31M11.5 27V46M12.5 45V65M13.5 41V60M14.5 43V77M15.5 71V78M16.5 60V80M17.5 55V67M18.5 67V82M19.5 54V78M20.5 36V58M21.5 34V47M22.5 27V53M23.5 10V27M24.5 11V21M25.5 18V33M26.5 0V29M27.5 0V24M28.5 24V35M29.5 27V38M30.5 19V29M31.5 29V70M32.5 55V71M33.5 51V61M34.5 55V75M35.5 75V86M36.5 55V80M37.5 55V69M38.5 62V73M39.5 38V69M40.5 36V60M41.5 16V56M42.5 15V48M43.5 14V52M44.5 5V37M45.5 26V56M46.5 6V27M47.5 26V58M48.5 12V56M49.5 11V71M50.5 26V73M51.5 17V65M52.5 47V80M53.5 25V51M54.5 51V86M55.5 27V65M56.5 33V82M57.5 23V80M58.5 18V68M59.5 29V70M60.5 16V44M61.5 44V60M62.5 4V46M63.5 21V60M64.5 4V54M65.5 10V52M66.5 20V57M67.5 11V53M68.5 46V65M69.5 23V46M70.5 40V72M71.5 24V62M72.5 28V78M73.5 37V78M74.5 28V68M75.5 43V76M76.5 26V46M77.5 45V66M78.5 18V73M79.5 17V79M80.5 22V57M81.5 28V68M82.5 18V58M83.5 17V62M84.5 17V67M85.5 30V75M86.5 20V59M87.5 18V53M88.5 16V61M89.5 21V64M90.5 21V54M91.5 19V53M92.5 19V59M93.5 30V60M94.5 26V58M95.5 27V69M96.5 23V63M97.5 31V62M98.5 20V58M99.5 27V54M100.5 17V57M101.5 23V61M102.5 24V56M103.5 21V70M104.5 27V62M105.5 24V63M106.5 21V64M107.5 22V59M108.5 23V60M109.5 18V62M110.5 15V61M111.5 29V71M112.5 25V71M113.5 31V73M114.5 28V62M115.5 24V60M116.5 19V63M117.5 25V63M118.5 25V58M119.5 19V64M120.5 27V68M121.5 23V61M122.5 23V58M123.5 29V68M124.5 9V65M125.5 27V62M126.5 31V59M127.5 31V66M128.5 24V68M129.5 9V67M130.5 21V68M131.5 27V57M132.5 22V78M133.5 23V56M134.5 23V58M135.5 27V71M136.5 32V62M137.5 29V63M138.5 25V56M139.5 25V58M140.5 31V57M500.5 16V63M501.5 32V54M502.5 33V55M503.5 17V60M504.5 31V58M505.5 16V58M506.5 29V56M507.5 32V53M508.5 31V55M509.5 32V71M510.5 27V70M511.5 28V61M512.5 27V68M513.5 30V56M514.5 28V61M515.5 27V56M516.5 17V54M517.5 31V56M518.5 28V54M519.5 21V72M520.5 30V64M521.5 17V65M522.5 25V54M523.5 23V66M524.5 16V56M525.5 25V60M526.5 26V63M527.5 29V68M528.5 28V62M529.5 28V59M530.5 31V59M531.5 32V65M532.5 29V55M533.5 33V55M534.5 32V60M535.5 34V63M536.5 21V54M537.5 34V54M538.5 34V54M539.5 18V58M540.5 30V54M541.5 33V56M542.5 29V61M543.5 35V74M544.5 32V57M545.5 34V65M546.5 22V66M547.5 28V53M548.5 31V66M549.5 20V65M550.5 33V68M551.5 33V61M552.5 32V53M553.5 32V69M554.5 22V53M555.5 30V63M556.5 35V70M557.5 25V59M558.5 30V55M559.5 28V59M560.5 31V67M561.5 26V55M562.5 17V56M563.5 27V71M564.5 28V63M565.5 34V69M566.5 32V57M567.5 26V56M568.5 18V63M569.5 29V57M570.5 29V66M571.5 33V65M572.5 23V58M573.5 11V56M574.5 32V65M575.5 27V61M576.5 26V57M577.5 33V56M578.5 31V56M579.5 33V59M580.5 27V69M581.5 30V57M582.5 33V54M583.5 31V56M584.5 23V54M585.5 25V68M586.5 33V52M587.5 26V60M588.5 26V60M589.5 7V64M590.5 29V52M591.5 29V66M592.5 32V53M593.5 31V59M594.5 17V53M595.5 30V68M596.5 32V56M597.5 23V58M598.5 29V52M599.5 19V67M600.5 17V57M601.5 17V62M602.5 10V60M603.5 23V61M604.5 16V60M605.5 16V72M606.5 31V66M607.5 33V54M608.5 33V67M609.5 32V58M610.5 21V63M611.5 32V56" stroke="#00ff00" stroke-width="1" shape-rendering="crispEdges"/><path d="M141.5 29V69M142.5 27V60M143.5 35V56M144.5 27V62M145.5 33V58M146.5 28V62M147.5 29V61M148.5 33V53M149.5 30V64M150.5 33V55M151.5 32V56M152.5 35V64M153.5 30V65M154.5 28V69M155.5 26V58M156.5 28V56M157.5 23V65M158.5 29V64M159.5 26V68M160.5 35V55M161.5 26V54M162.5 32V53M163.5 32V52M164.5 28V60M165.5 32V71M166.5 32V67M167.5 21V59M168.5 29V55M169.5 25V58M170.5 26V59M171.5 33V53M172.5 21V57M173.5 24V58M174.5 34V57M175.5 32V58M176.5 30V60M177.5 23V57M178.5 29V66M179.5 29V54M180.5 25V54M181.5 23V58M182.5 15V53M183.5 30V59M184.5 33V57M185.5 33V55M186.5 22V60M187.5 24V55M188.5 32V52M189.5 29V61M190.5 26V62M191.5 26V55M192.5 18V57M193.5 24V60M194.5 26V57M195.5 27V62M196.5 33V59M197.5 29V59M198.5 21V55M199.5 32V60M200.5 28V62M201.5 24V56M202.5 21V55M203.5 27V63M204.5 27V66M205.5 31V59M206.5 29V58M207.5 30V75M208.5 33V60M209.5 31V60M210.5 31V72M211.5 20V57M212.5 26V55M213.5 32V54M214.5 35V57M215.5 32V66M216.5 28V59M217.5 35V54M218.5 26V59M219.5 27V59M220.5 32V60M221.5 31V54M222.5 35V63M223.5 24V64M224.5 32V63M225.5 34V55M226.5 30V65M227.5 29V55M228.5 32V59M229.5 36V68M230.5 27V57M231.5 26V57M232.5 28V59M233.5 28V54M234.5 22V53M235.5 32V60M236.5 30V59M237.5 26V69M238.5 34V60M239.5 34V59M240.5 34V63M241.5 19V59M242.5 18V55M243.5 33V54M244.5 31V52M245.5 33V56M246.5 33V54M247.5 27V56M248.5 31V55M249.5 24V52M250.5 14V57M251.5 31V63M252.5 24V52M253.5 24V57M254.5 27V54M255.5 28V53M256.5 23V57M257.5 28V54M258.5 23V56M259.5 24V57M260.5 30V60M261.5 32V54M262.5 17V55M263.5 25V53M264.5 25V53M265.5 28V62M266.5 32V58M267.5 13V62M268.5 28V63M269.5 25V61M270.5 24V71M271.5 31V64M272.5 29V61M273.5 27V63M274.5 30V61M275.5 31V67M276.5 41V59M277.5 24V47M278.5 29V58M279.5 24V54M280.5 30V49M281.5 23V51M282.5 22V46M283.5 27V46M284.5 23V39M285.5 39V52M286.5 36V48M287.5 47V65M288.5 49V61M289.5 57V67M290.5 46V66M291.5 47V60M292.5 34V56M293.5 27V38M294.5 19V37M295.5 13V23M296.5 14V25M297.5 15V32M298.5 27V38M299.5 37V55M300.5 0V14M301.5 0V10M302.5 7V35M303.5 35V43M304.5 40V53M305.5 53V83M306.5 74V83M307.5 66V76M308.5 67V78M309.5 56V78M310.5 31V56M311.5 29V36M312.5 16V35M313.5 4V16M314.5 7V21M315.5 21V28M316.5 21V25M317.5 22V51M318.5 49V63M319.5 52V62M320.5 52V69M321.5 69V79M322.5 54V73M323.5 50V59M324.5 52V61M325.5 24V55M326.5 20V27M327.5 26V33M328.5 13V28M329.5 9V21M330.5 21V36M331.5 27V40M332.5 27V44M333.5 44V64M334.5 54V67M335.5 53V58M336.5 56V76M337.5 65V78M338.5 46V65M339.5 47V59M340.5 39V59M341.5 21V39M342.5 24V32M343.5 21V33M344.5 7V22M345.5 13V26M346.5 21V31M347.5 26V31M348.5 28V46M349.5 46V60M350.5 54V61M351.5 58V71M352.5 69V78M353.5 67V77M354.5 61V70M355.5 56V67M356.5 43V56M357.5 32V43M358.5 27V38M359.5 12V29M360.5 9V16M361.5 10V18M362.5 14V19M363.5 15V23M364.5 19V40M365.5 38V46M366.5 42V56M367.5 50V68M368.5 68V74M369.5 66V73M370.5 68V78M371.5 63V78M372.5 50V67M373.5 44V54M374.5 33V49M375.5 21V34M376.5 16V24M377.5 16V24M378.5 9V20M379.5 10V24M380.5 24V35M381.5 30V41M382.5 36V53M383.5 49V67M384.5 59V66M385.5 59V70M386.5 67V72M387.5 55V72M388.5 48V57M389.5 43V55M390.5 29V47M391.5 22V29M392.5 21V29M393.5 17V27M394.5 14V21M395.5 18V32M396.5 31V38M397.5 34V50M398.5 50V64M399.5 64V69M400.5 60V68M401.5 62V71M402.5 62V71M403.5 42V63M404.5 39V45M405.5 25V39M406.5 13V25M407.5 12V20M408.5 14V22M409.5 14V22M410.5 16V38M411.5 38V51M412.5 50V61M413.5 61V71M414.5 72V82M415.5 65V81M416.5 63V68M417.5 51V68M418.5 32V51M419.5 18V32M420.5 11V22M421.5 2V17M422.5 2V13M423.5 9V28M424.5 25V36M425.5 34V49M426.5 49V78M427.5 74V80M428.5 71V76M429.5 74V86M430.5 63V84M431.5 38V63M432.5 34V41M433.5 15V38M434.5 0V15M435.5 0V14M436.5 12V20M437.5 11V22M438.5 20V49M439.5 49V68M440.5 59V68M441.5 65V84M442.5 79V86M443.5 58V82M444.5 52V60M445.5 45V59M446.5 12V45M447.5 7V17M448.5 14V22M449.5 4V21M450.5 5V23M451.5 20V47M452.5 43V48M453.5 44V61M454.5 60V81M455.5 67V81M456.5 58V67M457.5 62V70M458.5 38V69M459.5 26V39M460.5 26V32M461.5 13V32M462.5 5V16M463.5 14V30M464.5 30V55M465.5 29V57M466.5 12V57M467.5 27V60M468.5 13V55M469.5 29V55M470.5 31V57M471.5 33V57M472.5 19V55M473.5 20V63M474.5 29V55M475.5 26V61M476.5 32V58M477.5 12V66M478.5 30V54M479.5 31V55M480.5 12V56M481.5 21V69M482.5 18V55M483.5 16V74M484.5 26V54M485.5 6V54M486.5 26V56M487.5 6V67M488.5 32V62M489.5 33V73M490.5 33V55M491.5 19V73M492.5 33V58M493.5 30V54M494.5 34V65M495.5 29V56M496.5 33V56M497.5 15V70M498.5 35V54M499.5 13V65" stroke="#00ffff" stroke-width="1" shape-rendering="crispEdges"/><path d="M0 21.5H612" stroke="#a4a4a4" stroke-width="1" stroke-dasharray="3 3" shape-rendering="crispEdges"/><path d="M0 64.5H612" stroke="#a4a4a4" stroke-width="1" stroke-dasharray="3 3" shape-rendering="crispEdges"/><rect x="0" y="86" width="612" height="1" fill="#a0a0a0"/><rect x="0" y="87" width="612" height="1" fill="#fff"/><rect x="0" y="88" width="612" height="86" fill="#000"/><rect x="141" y="88" width="359" height="86" fill="#0000ff"/><path d="M0 131.5H612" stroke="#808080" stroke-width="1"/><path d="M0.5 131V151M1.5 133V146M2.5 132V145M3.5 105V136M4.5 98V110M5.5 110V122M6.5 98V114M7.5 89V103M8.5 95V120M9.5 103V123M10.5 102V119M11.5 115V134M12.5 133V153M13.5 129V148M14.5 131V165M15.5 159V166M16.5 148V168M17.5 143V155M18.5 155V170M19.5 142V166M20.5 124V146M21.5 122V135M22.5 115V141M23.5 98V115M24.5 99V109M25.5 106V121M26.5 88V117M27.5 88V112M28.5 112V123M29.5 115V126M30.5 107V117M31.5 117V158M32.5 143V159M33.5 139V149M34.5 143V163M35.5 163V174M36.5 143V168M37.5 143V157M38.5 150V161M39.5 126V157M40.5 124V148M41.5 104V144M42.5 103V136M43.5 102V140M44.5 93V125M45.5 114V144M46.5 94V115M47.5 114V146M48.5 100V144M49.5 99V159M50.5 114V161M51.5 105V153M52.5 135V168M53.5 113V139M54.5 139V174M55.5 115V153M56.5 121V170M57.5 111V168M58.5 106V156M59.5 117V158M60.5 104V132M61.5 132V148M62.5 92V134M63.5 109V148M64.5 92V142M65.5 98V140M66.5 108V145M67.5 99V141M68.5 134V153M69.5 111V134M70.5 128V160M71.5 112V150M72.5 116V166M73.5 125V166M74.5 116V156M75.5 131V164M76.5 114V134M77.5 133V154M78.5 106V161M79.5 105V167M80.5 110V145M81.5 116V156M82.5 106V146M83.5 105V150M84.5 105V155M85.5 118V163M86.5 108V147M87.5 106V141M88.5 104V149M89.5 109V152M90.5 109V142M91.5 107V141M92.5 107V147M93.5 118V148M94.5 114V146M95.5 115V157M96.5 111V151M97.5 119V150M98.5 108V146M99.5 115V142M100.5 105V145M101.5 111V149M102.5 112V144M103.5 109V158M104.5 115V150M105.5 112V151M106.5 109V152M107.5 110V147M108.5 111V148M109.5 106V150M110.5 103V149M111.5 117V159M112.5 113V159M113.5 119V161M114.5 116V150M115.5 112V148M116.5 107V151M117.5 113V151M118.5 113V146M119.5 107V152M120.5 115V156M121.5 111V149M122.5 111V146M123.5 117V156M124.5 97V153M125.5 115V150M126.5 119V147M127.5 119V154M128.5 112V156M129.5 97V155M130.5 109V156M131.5 115V145M132.5 110V166M133.5 111V144M134.5 111V146M135.5 115V159M136.5 120V150M137.5 117V151M138.5 113V144M139.5 113V146M140.5 119V145M500.5 104V151M501.5 120V142M502.5 121V143M503.5 105V148M504.5 119V146M505.5 104V146M506.5 117V144M507.5 120V141M508.5 119V143M509.5 120V159M510.5 115V158M511.5 116V149M512.5 115V156M513.5 118V144M514.5 116V149M515.5 115V144M516.5 105V142M517.5 119V144M518.5 116V142M519.5 109V160M520.5 118V152M521.5 105V153M522.5 113V142M523.5 111V154M524.5 104V144M525.5 113V148M526.5 114V151M527.5 117V156M528.5 116V150M529.5 116V147M530.5 119V147M531.5 120V153M532.5 117V143M533.5 121V143M534.5 120V148M535.5 122V151M536.5 109V142M537.5 122V142M538.5 122V142M539.5 106V146M540.5 118V142M541.5 121V144M542.5 117V149M543.5 123V162M544.5 120V145M545.5 122V153M546.5 110V154M547.5 116V141M548.5 119V154M549.5 108V153M550.5 121V156M551.5 121V149M552.5 120V141M553.5 120V157M554.5 110V141M555.5 118V151M556.5 123V158M557.5 113V147M558.5 118V143M559.5 116V147M560.5 119V155M561.5 114V143M562.5 105V144M563.5 115V159M564.5 116V151M565.5 122V157M566.5 120V145M567.5 114V144M568.5 106V151M569.5 117V145M570.5 117V154M571.5 121V153M572.5 111V146M573.5 99V144M574.5 120V153M575.5 115V149M576.5 114V145M577.5 121V144M578.5 119V144M579.5 121V147M580.5 115V157M581.5 118V145M582.5 121V142M583.5 119V144M584.5 111V142M585.5 113V156M586.5 121V140M587.5 114V148M588.5 114V148M589.5 95V152M590.5 117V140M591.5 117V154M592.5 120V141M593.5 119V147M594.5 105V141M595.5 118V156M596.5 120V144M597.5 111V146M598.5 117V140M599.5 107V155M600.5 105V145M601.5 105V150M602.5 98V148M603.5 111V149M604.5 104V148M605.5 104V160M606.5 119V154M607.5 121V142M608.5 121V155M609.5 120V146M610.5 109V151M611.5 120V144" stroke="#00ff00" stroke-width="1" shape-rendering="crispEdges"/><path d="M141.5 117V157M142.5 115V148M143.5 123V144M144.5 115V150M145.5 121V146M146.5 116V150M147.5 117V149M148.5 121V141M149.5 118V152M150.5 121V143M151.5 120V144M152.5 123V152M153.5 118V153M154.5 116V157M155.5 114V146M156.5 116V144M157.5 111V153M158.5 117V152M159.5 114V156M160.5 123V143M161.5 114V142M162.5 120V141M163.5 120V140M164.5 116V148M165.5 120V159M166.5 120V155M167.5 109V147M168.5 117V143M169.5 113V146M170.5 114V147M171.5 121V141M172.5 109V145M173.5 112V146M174.5 122V145M175.5 120V146M176.5 118V148M177.5 111V145M178.5 117V154M179.5 117V142M180.5 113V142M181.5 111V146M182.5 103V141M183.5 118V147M184.5 121V145M185.5 121V143M186.5 110V148M187.5 112V143M188.5 120V140M189.5 117V149M190.5 114V150M191.5 114V143M192.5 106V145M193.5 112V148M194.5 114V145M195.5 115V150M196.5 121V147M197.5 117V147M198.5 109V143M199.5 120V148M200.5 116V150M201.5 112V144M202.5 109V143M203.5 115V151M204.5 115V154M205.5 119V147M206.5 117V146M207.5 118V163M208.5 121V148M209.5 119V148M210.5 119V160M211.5 108V145M212.5 114V143M213.5 120V142M214.5 123V145M215.5 120V154M216.5 116V147M217.5 123V142M218.5 114V147M219.5 115V147M220.5 120V148M221.5 119V142M222.5 123V151M223.5 112V152M224.5 120V151M225.5 122V143M226.5 118V153M227.5 117V143M228.5 120V147M229.5 124V156M230.5 115V145M231.5 114V145M232.5 116V147M233.5 116V142M234.5 110V141M235.5 120V148M236.5 118V147M237.5 114V157M238.5 122V148M239.5 122V147M240.5 122V151M241.5 107V147M242.5 106V143M243.5 121V142M244.5 119V140M245.5 121V144M246.5 121V142M247.5 115V144M248.5 119V143M249.5 112V140M250.5 102V145M251.5 119V151M252.5 112V140M253.5 112V145M254.5 115V142M255.5 116V141M256.5 111V145M257.5 116V142M258.5 111V144M259.5 112V145M260.5 118V148M261.5 120V142M262.5 105V143M263.5 113V141M264.5 113V141M265.5 116V150M266.5 120V146M267.5 101V150M268.5 116V151M269.5 113V149M270.5 112V159M271.5 119V152M272.5 117V149M273.5 115V151M274.5 118V149M275.5 119V155M276.5 129V147M277.5 112V135M278.5 117V146M279.5 112V142M280.5 118V137M281.5 111V139M282.5 110V134M283.5 115V134M284.5 111V127M285.5 127V140M286.5 124V136M287.5 135V153M288.5 137V149M289.5 145V155M290.5 134V154M291.5 135V148M292.5 122V144M293.5 115V126M294.5 107V125M295.5 101V111M296.5 102V113M297.5 103V120M298.5 115V126M299.5 125V143M300.5 88V102M301.5 88V98M302.5 95V123M303.5 123V131M304.5 128V141M305.5 141V171M306.5 162V171M307.5 154V164M308.5 155V166M309.5 144V166M310.5 119V144M311.5 117V124M312.5 104V123M313.5 92V104M314.5 95V109M315.5 109V116M316.5 109V113M317.5 110V139M318.5 137V151M319.5 140V150M320.5 140V157M321.5 157V167M322.5 142V161M323.5 138V147M324.5 140V149M325.5 112V143M326.5 108V115M327.5 114V121M328.5 101V116M329.5 97V109M330.5 109V124M331.5 115V128M332.5 115V132M333.5 132V152M334.5 142V155M335.5 141V146M336.5 144V164M337.5 153V166M338.5 134V153M339.5 135V147M340.5 127V147M341.5 109V127M342.5 112V120M343.5 109V121M344.5 95V110M345.5 101V114M346.5 109V119M347.5 114V119M348.5 116V134M349.5 134V148M350.5 142V149M351.5 146V159M352.5 157V166M353.5 155V165M354.5 149V158M355.5 144V155M356.5 131V144M357.5 120V131M358.5 115V126M359.5 100V117M360.5 97V104M361.5 98V106M362.5 102V107M363.5 103V111M364.5 107V128M365.5 126V134M366.5 130V144M367.5 138V156M368.5 156V162M369.5 154V161M370.5 156V166M371.5 151V166M372.5 138V155M373.5 132V142M374.5 121V137M375.5 109V122M376.5 104V112M377.5 104V112M378.5 97V108M379.5 98V112M380.5 112V123M381.5 118V129M382.5 124V141M383.5 137V155M384.5 147V154M385.5 147V158M386.5 155V160M387.5 143V160M388.5 136V145M389.5 131V143M390.5 117V135M391.5 110V117M392.5 109V117M393.5 105V115M394.5 102V109M395.5 106V120M396.5 119V126M397.5 122V138M398.5 138V152M399.5 152V157M400.5 148V156M401.5 150V159M402.5 150V159M403.5 130V151M404.5 127V133M405.5 113V127M406.5 101V113M407.5 100V108M408.5 102V110M409.5 102V110M410.5 104V126M411.5 126V139M412.5 138V149M413.5 149V159M414.5 160V170M415.5 153V169M416.5 151V156M417.5 139V156M418.5 120V139M419.5 106V120M420.5 99V110M421.5 90V105M422.5 90V101M423.5 97V116M424.5 113V124M425.5 122V137M426.5 137V166M427.5 162V168M428.5 159V164M429.5 162V174M430.5 151V172M431.5 126V151M432.5 122V129M433.5 103V126M434.5 88V103M435.5 88V102M436.5 100V108M437.5 99V110M438.5 108V137M439.5 137V156M440.5 147V156M441.5 153V172M442.5 167V174M443.5 146V170M444.5 140V148M445.5 133V147M446.5 100V133M447.5 95V105M448.5 102V110M449.5 92V109M450.5 93V111M451.5 108V135M452.5 131V136M453.5 132V149M454.5 148V169M455.5 155V169M456.5 146V155M457.5 150V158M458.5 126V157M459.5 114V127M460.5 114V120M461.5 101V120M462.5 93V104M463.5 102V118M464.5 118V143M465.5 117V145M466.5 100V145M467.5 115V148M468.5 101V143M469.5 117V143M470.5 119V145M471.5 121V145M472.5 107V143M473.5 108V151M474.5 117V143M475.5 114V149M476.5 120V146M477.5 100V154M478.5 118V142M479.5 119V143M480.5 100V144M481.5 109V157M482.5 106V143M483.5 104V162M484.5 114V142M485.5 94V142M486.5 114V144M487.5 94V155M488.5 120V150M489.5 121V161M490.5 121V143M491.5 107V161M492.5 121V146M493.5 118V142M494.5 122V153M495.5 117V144M496.5 121V144M497.5 103V158M498.5 123V142M499.5 101V153" stroke="#00ffff" stroke-width="1" shape-rendering="crispEdges"/><path d="M0 109.5H612" stroke="#a4a4a4" stroke-width="1" stroke-dasharray="3 3" shape-rendering="crispEdges"/><path d="M0 152.5H612" stroke="#a4a4a4" stroke-width="1" stroke-dasharray="3 3" shape-rendering="crispEdges"/><rect x="500" y="0" width="1" height="174" fill="#ffff00"/><rect x="500" y="16" width="1" height="47" fill="#ff0000"/><rect x="500" y="104" width="1" height="47" fill="#ff0000"/><path d="M496.5 0 L504.5 0 L500.5 5 Z" fill="#ffff00"/><path d="M496.5 174 L504.5 174 L500.5 169 Z" fill="#ffff00"/></svg><div style="position:absolute;left:0px;top:95px;width:41px;height:1px;background:#a0a0a0"></div><div style="position:absolute;left:0px;top:96px;width:41px;height:1px;background:#fff"></div><div style="position:absolute;left:0px;top:183px;width:41px;height:1px;background:#a0a0a0"></div><div style="position:absolute;left:0px;top:184px;width:41px;height:1px;background:#fff"></div><svg style="position:absolute;left:41px;top:184px;" width="612" height="20" viewBox="0 0 612 20"><rect x="6" y="0" width="1" height="2" fill="#000"/><rect x="14" y="0" width="1" height="2" fill="#000"/><rect x="21" y="0" width="1" height="2" fill="#000"/><rect x="29" y="0" width="1" height="2" fill="#000"/><rect x="37" y="0" width="1" height="2" fill="#000"/><rect x="44" y="0" width="1" height="5" fill="#000"/><rect x="52" y="0" width="1" height="2" fill="#000"/><rect x="60" y="0" width="1" height="2" fill="#000"/><rect x="67" y="0" width="1" height="2" fill="#000"/><rect x="75" y="0" width="1" height="2" fill="#000"/><rect x="83" y="0" width="1" height="2" fill="#000"/><rect x="90" y="0" width="1" height="2" fill="#000"/><rect x="98" y="0" width="1" height="2" fill="#000"/><rect x="106" y="0" width="1" height="2" fill="#000"/><rect x="113" y="0" width="1" height="2" fill="#000"/><rect x="121" y="0" width="1" height="5" fill="#000"/><rect x="129" y="0" width="1" height="2" fill="#000"/><rect x="136" y="0" width="1" height="2" fill="#000"/><rect x="144" y="0" width="1" height="2" fill="#000"/><rect x="152" y="0" width="1" height="2" fill="#000"/><rect x="159" y="0" width="1" height="2" fill="#000"/><rect x="167" y="0" width="1" height="2" fill="#000"/><rect x="175" y="0" width="1" height="2" fill="#000"/><rect x="182" y="0" width="1" height="2" fill="#000"/><rect x="190" y="0" width="1" height="2" fill="#000"/><rect x="198" y="0" width="1" height="5" fill="#000"/><rect x="205" y="0" width="1" height="2" fill="#000"/><rect x="213" y="0" width="1" height="2" fill="#000"/><rect x="221" y="0" width="1" height="2" fill="#000"/><rect x="228" y="0" width="1" height="2" fill="#000"/><rect x="236" y="0" width="1" height="2" fill="#000"/><rect x="244" y="0" width="1" height="2" fill="#000"/><rect x="251" y="0" width="1" height="2" fill="#000"/><rect x="259" y="0" width="1" height="2" fill="#000"/><rect x="267" y="0" width="1" height="2" fill="#000"/><rect x="274" y="0" width="1" height="5" fill="#000"/><rect x="282" y="0" width="1" height="2" fill="#000"/><rect x="290" y="0" width="1" height="2" fill="#000"/><rect x="298" y="0" width="1" height="2" fill="#000"/><rect x="305" y="0" width="1" height="2" fill="#000"/><rect x="313" y="0" width="1" height="2" fill="#000"/><rect x="321" y="0" width="1" height="2" fill="#000"/><rect x="328" y="0" width="1" height="2" fill="#000"/><rect x="336" y="0" width="1" height="2" fill="#000"/><rect x="344" y="0" width="1" height="2" fill="#000"/><rect x="351" y="0" width="1" height="5" fill="#000"/><rect x="359" y="0" width="1" height="2" fill="#000"/><rect x="367" y="0" width="1" height="2" fill="#000"/><rect x="374" y="0" width="1" height="2" fill="#000"/><rect x="382" y="0" width="1" height="2" fill="#000"/><rect x="390" y="0" width="1" height="2" fill="#000"/><rect x="397" y="0" width="1" height="2" fill="#000"/><rect x="405" y="0" width="1" height="2" fill="#000"/><rect x="413" y="0" width="1" height="2" fill="#000"/><rect x="420" y="0" width="1" height="2" fill="#000"/><rect x="428" y="0" width="1" height="5" fill="#000"/><rect x="436" y="0" width="1" height="2" fill="#000"/><rect x="443" y="0" width="1" height="2" fill="#000"/><rect x="451" y="0" width="1" height="2" fill="#000"/><rect x="459" y="0" width="1" height="2" fill="#000"/><rect x="466" y="0" width="1" height="2" fill="#000"/><rect x="474" y="0" width="1" height="2" fill="#000"/><rect x="482" y="0" width="1" height="2" fill="#000"/><rect x="489" y="0" width="1" height="2" fill="#000"/><rect x="497" y="0" width="1" height="2" fill="#000"/><rect x="505" y="0" width="1" height="5" fill="#000"/><rect x="512" y="0" width="1" height="2" fill="#000"/><rect x="520" y="0" width="1" height="2" fill="#000"/><rect x="528" y="0" width="1" height="2" fill="#000"/><rect x="535" y="0" width="1" height="2" fill="#000"/><rect x="543" y="0" width="1" height="2" fill="#000"/><rect x="551" y="0" width="1" height="2" fill="#000"/><rect x="558" y="0" width="1" height="2" fill="#000"/><rect x="566" y="0" width="1" height="2" fill="#000"/><rect x="574" y="0" width="1" height="2" fill="#000"/><rect x="581" y="0" width="1" height="5" fill="#000"/><rect x="589" y="0" width="1" height="2" fill="#000"/><rect x="597" y="0" width="1" height="2" fill="#000"/><rect x="604" y="0" width="1" height="2" fill="#000"/><rect x="612" y="0" width="1" height="2" fill="#000"/></svg><div style="position:absolute;left:41px;top:184px;width:612px;height:20px;overflow:hidden"><div style="position:absolute;left:-32px;top:6px;font-size:11px;line-height:13px;color:#000;white-space:nowrap;letter-spacing:-0.1px">00:00:02.322</div><div style="position:absolute;left:44px;top:6px;font-size:11px;line-height:13px;color:#000;white-space:nowrap;letter-spacing:-0.1px">00:00:02.415</div><div style="position:absolute;left:121px;top:6px;font-size:11px;line-height:13px;color:#000;white-space:nowrap;letter-spacing:-0.1px">00:00:02.508</div><div style="position:absolute;left:198px;top:6px;font-size:11px;line-height:13px;color:#000;white-space:nowrap;letter-spacing:-0.1px">00:00:02.601</div><div style="position:absolute;left:274px;top:6px;font-size:11px;line-height:13px;color:#000;white-space:nowrap;letter-spacing:-0.1px">00:00:02.694</div><div style="position:absolute;left:351px;top:6px;font-size:11px;line-height:13px;color:#000;white-space:nowrap;letter-spacing:-0.1px">00:00:02.786</div><div style="position:absolute;left:428px;top:6px;font-size:11px;line-height:13px;color:#000;white-space:nowrap;letter-spacing:-0.1px">00:00:02.879</div><div style="position:absolute;left:505px;top:6px;font-size:11px;line-height:13px;color:#000;white-space:nowrap;letter-spacing:-0.1px">00:00:02.972</div><div style="position:absolute;left:581px;top:6px;font-size:11px;line-height:13px;color:#000;white-space:nowrap;letter-spacing:-0.1px">00:00:03.065</div></div><div style="position:absolute;left:0px;top:204px;width:653px;height:1px;background:#a0a0a0"></div><div style="position:absolute;left:0px;top:205px;width:653px;height:1px;background:#fff"></div><div class="btn" style="left:1px;top:209px;width:23px;height:23px"></div><svg style="position:absolute;left:1px;top:209px;" width="22" height="22" viewBox="0 0 22 22"><path d="M13.280000000000001 12.879999999999999 L17.5 17.2" stroke="#3c3c3c" stroke-width="2.8" stroke-linecap="round"/><circle cx="10.4" cy="10" r="4.8" fill="url(#gLens)" stroke="#3c3c3c" stroke-width="1.5"/><path d="M7.4 10 H13.4 M10.4 7 V13" stroke="#000" stroke-width="1.5"/><path d="M18.5 5.5 V12.5 M16.9 7.3 L18.5 5.5 L20.1 7.3 M16.9 10.7 L18.5 12.5 L20.1 10.7" stroke="#000" stroke-width="1.3" fill="none"/></svg><div class="btn" style="left:25px;top:209px;width:23px;height:23px"></div><svg style="position:absolute;left:25px;top:209px;" width="22" height="22" viewBox="0 0 22 22"><path d="M13.280000000000001 12.879999999999999 L17.5 17.2" stroke="#3c3c3c" stroke-width="2.8" stroke-linecap="round"/><circle cx="10.4" cy="10" r="4.8" fill="url(#gLens)" stroke="#3c3c3c" stroke-width="1.5"/><path d="M7.4 10 H13.4" stroke="#000" stroke-width="1.5"/><path d="M18.5 5.5 V12.5 M16.9 7.3 L18.5 5.5 L20.1 7.3 M16.9 10.7 L18.5 12.5 L20.1 10.7" stroke="#000" stroke-width="1.3" fill="none"/></svg><div class="btn" style="left:604px;top:209px;width:23px;height:23px"></div><svg style="position:absolute;left:604px;top:209px;" width="22" height="22" viewBox="0 0 22 22"><path d="M13.280000000000001 12.879999999999999 L17.5 17.2" stroke="#3c3c3c" stroke-width="2.8" stroke-linecap="round"/><circle cx="10.4" cy="10" r="4.8" fill="url(#gLens)" stroke="#3c3c3c" stroke-width="1.5"/><path d="M7.4 10 H13.4 M10.4 7 V13" stroke="#000" stroke-width="1.5"/><path d="M6.5 18.3 H13.5 M8.3 16.7 L6.5 18.3 L8.3 19.9 M11.7 16.7 L13.5 18.3 L11.7 19.9" stroke="#000" stroke-width="1.1" fill="none"/></svg><div class="btn" style="left:628px;top:209px;width:23px;height:23px"></div><svg style="position:absolute;left:628px;top:209px;" width="22" height="22" viewBox="0 0 22 22"><path d="M13.280000000000001 12.879999999999999 L17.5 17.2" stroke="#3c3c3c" stroke-width="2.8" stroke-linecap="round"/><circle cx="10.4" cy="10" r="4.8" fill="url(#gLens)" stroke="#3c3c3c" stroke-width="1.5"/><path d="M7.4 10 H13.4" stroke="#000" stroke-width="1.5"/><path d="M6.5 18.3 H13.5 M8.3 16.7 L6.5 18.3 L8.3 19.9 M11.7 16.7 L13.5 18.3 L11.7 19.9" stroke="#000" stroke-width="1.1" fill="none"/></svg><div style="position:absolute;left:56px;top:211px;width:540px;height:18px;background:linear-gradient(90deg,#e6e6e6,#f0f0f0 3%,#f0f0f0 97%,#e6e6e6);border-top:1px solid #e8e8e8;box-sizing:border-box"></div><svg style="position:absolute;left:56px;top:211px;" width="540" height="18" viewBox="0 0 540 18"><path d="M7 9 L10 6 V12 Z" fill="#505050"/><path d="M533 9 L530 6 V12 Z" fill="#505050"/></svg><div style="position:absolute;left:279px;top:211px;width:62px;height:18px;box-sizing:border-box;border:1px solid #9a9a9a;border-radius:2px;background:linear-gradient(#f3f3f3,#e6e6e6 50%,#d6d6d6 51%,#cfcfcf)"></div><svg style="position:absolute;left:279px;top:211px;" width="62" height="18" viewBox="0 0 62 18"><rect x="28" y="6" width="1" height="6" fill="#606060"/><rect x="30" y="6" width="1" height="6" fill="#606060"/><rect x="32" y="6" width="1" height="6" fill="#606060"/></svg><div class="btn" style="left:1px;top:236px;width:31px;height:23px"></div><svg style="position:absolute;left:1px;top:236px;" width="30" height="22" viewBox="0 0 30 22"><path d="M12.5 8.0 Q12.5 7.0 13.5 7.0 H16.75 L21.0 12.25 L16.75 17.5 H13.5 Q12.5 17.5 12.5 16.5 Z" fill="url(#gPlay)" stroke="#3a3a3a" stroke-width="1" stroke-linejoin="round"/></svg><div class="btn" style="left:33px;top:236px;width:31px;height:23px"></div><svg style="position:absolute;left:33px;top:236px;" width="30" height="22" viewBox="0 0 30 22"><rect x="10" y="6.5" width="2.2" height="11.5" fill="#303030"/><path d="M13.5 8.0 Q13.5 7.0 14.5 7.0 H17.75 L22.0 12.25 L17.75 17.5 H14.5 Q13.5 17.5 13.5 16.5 Z" fill="url(#gPlay)" stroke="#3a3a3a" stroke-width="1" stroke-linejoin="round"/></svg><div class="btn" style="left:65px;top:236px;width:31px;height:23px"></div><svg style="position:absolute;left:65px;top:236px;" width="30" height="22" viewBox="0 0 30 22"><rect x="10.5" y="6.5" width="11" height="11" rx="2.2" fill="url(#gStop)" stroke="#3a3a3a"/><path d="M13 8.5 H19" stroke="#fff" stroke-width=".8" stroke-dasharray="1 1"/></svg><div class="btn" style="left:97px;top:236px;width:31px;height:23px"></div><svg style="position:absolute;left:97px;top:236px;" width="30" height="22" viewBox="0 0 30 22"><rect x="9.5" y="6.5" width="3" height="11" rx="1" fill="url(#gGray)" stroke="#3a3a3a"/><path d="M22.5 6.5 V17.5 L13.5 12 Z" fill="url(#gGray)" stroke="#3a3a3a" stroke-linejoin="round"/></svg><div class="btn" style="left:129px;top:236px;width:31px;height:23px"></div><svg style="position:absolute;left:129px;top:236px;" width="30" height="22" viewBox="0 0 30 22"><path d="M9.5 6.5 V17.5 L18.5 12 Z" fill="url(#gGray)" stroke="#3a3a3a" stroke-linejoin="round"/><rect x="19.5" y="6.5" width="3" height="11" rx="1" fill="url(#gGray)" stroke="#3a3a3a"/></svg><div class="box" style="left:359px;top:236px;width:70px;height:22px">64:1</div><div class="box" style="left:432px;top:236px;width:70px;height:22px">00:00:00.436</div><div class="box" style="left:506px;top:236px;width:70px;height:22px">00:00:02.533</div><div class="box" style="left:580px;top:236px;width:70px;height:22px">00:00:02.968</div></div></div></body></html>
